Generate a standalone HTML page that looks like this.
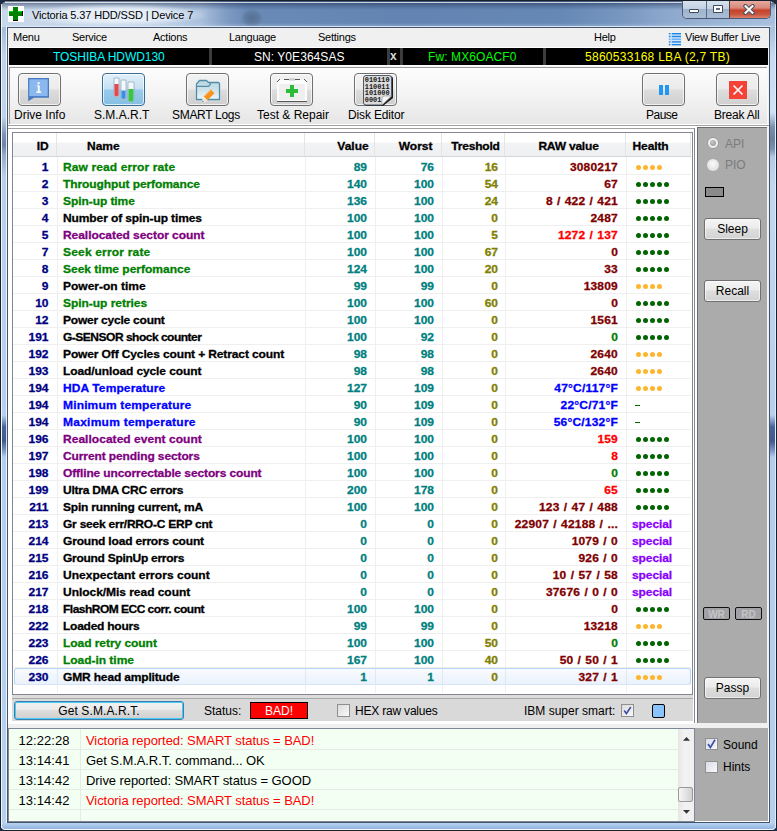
<!DOCTYPE html><html><head><meta charset="utf-8"><style>html,body{margin:0;padding:0;width:777px;height:831px;overflow:hidden;}body{position:relative;font-family:"Liberation Sans", sans-serif;}</style></head><body><div style="position:absolute;left:0;top:0;width:777px;height:831px;background:#1e2c44"></div>
<div style="position:absolute;left:0;top:0;width:777px;height:831px;background:#18202c;border-radius:8px 8px 5px 5px"></div>
<div style="position:absolute;left:1px;top:1px;width:775px;height:829px;border-radius:7px 7px 4px 4px;background:#b7d0ee"></div>
<div style="position:absolute;left:1px;top:1px;width:775px;height:26px;border-radius:7px 7px 0 0;background:linear-gradient(90deg,#c9d8ea 0px,#c4d5e9 150px,#aac0dc 200px,#7f9cc4 225px,#6a8ab6 245px,#6384b2 400px,#6688b5 560px,#7797c0 620px,#8aa6cb 660px,#97b1d3 700px,#a8c0de 777px)"></div>
<div style="position:absolute;left:1px;top:1px;width:775px;height:26px;border-radius:7px 7px 0 0;background:linear-gradient(180deg,rgba(20,35,70,0.5) 2px,rgba(30,50,90,0.35) 4px,rgba(40,60,90,0) 9px,rgba(255,255,255,0) 22px,rgba(200,220,240,0.4) 26px)"></div>
<div style="position:absolute;left:241px;top:9px;width:22px;height:18px;border-radius:50%;background:radial-gradient(ellipse at center,rgba(70,90,115,0.55) 0%,rgba(70,90,115,0.3) 45%,rgba(70,90,115,0) 75%)"></div>
<div style="position:absolute;left:5px;top:2px;width:767px;height:1px;background:rgba(255,255,255,0.75)"></div>
<div style="position:absolute;left:1px;top:4px;width:1px;height:824px;background:rgba(255,255,255,0.8)"></div>
<div style="position:absolute;left:775px;top:4px;width:1px;height:824px;background:rgba(255,255,255,0.6)"></div>
<div style="position:absolute;left:2px;top:27px;width:5px;height:796px;background:linear-gradient(180deg,#a3bbd8 0px,#bfd5ee 30px,#bdd3ec 90px,#7d92b0 108px,#6f84a2 118px,#95acc8 128px,#b8d0ec 150px,#b6cfee 388px,#8aa6cc 393px,#46639a 400px,#3f5b8e 414px,#7f9cc8 424px,#b3cdee 430px,#b6d0ef 796px)"></div>
<div style="position:absolute;left:770px;top:27px;width:5px;height:796px;background:linear-gradient(180deg,#a9c0dc 0px,#c6dbf2 30px,#cfe1f5 85px,#a9bfdb 92px,#7890b0 100px,#6a809e 112px,#7a92b2 122px,#b3cae6 130px,#c2d8f0 160px,#b7d0ef 388px,#8aa6cc 393px,#46639a 400px,#3f5b8e 414px,#7f9cc8 424px,#b3cdee 430px,#b6d0ef 796px)"></div>
<div style="position:absolute;left:2px;top:823px;width:773px;height:6px;background:linear-gradient(180deg,#b8d3f2,#93b4de);border-radius:0 0 4px 4px;border-bottom:1px solid rgba(255,255,255,0.85);box-sizing:content-box"></div>
<div style="position:absolute;left:6px;top:26px;width:765px;height:1px;background:rgba(225,235,248,0.9)"></div>
<div style="position:absolute;left:6px;top:27px;width:1px;height:796px;background:rgba(255,255,255,0.8)"></div>
<div style="position:absolute;left:769px;top:27px;width:1px;height:796px;background:rgba(255,255,255,0.6)"></div>
<div style="position:absolute;left:6px;top:822px;width:765px;height:1px;background:rgba(255,255,255,0.8)"></div>
<div style="position:absolute;left:7px;top:27px;width:761px;height:794px;border:1px solid #44546a;background:#f0f0f0"></div>
<div style="position:absolute;left:8px;top:6px;width:16px;height:16px;background:#fff"></div>
<svg style="position:absolute;left:8px;top:6px" width="16" height="16" viewBox="0 0 16 16"><rect x="5" y="1" width="5" height="14" fill="#000"/><rect x="1" y="5" width="14" height="5" fill="#000"/><rect x="1" y="5" width="13" height="5" fill="#008000"/><rect x="1" y="5" width="13" height="1" fill="#00e000"/><rect x="5" y="1" width="5" height="13" fill="#008000"/></svg>
<div style="position:absolute;left:22px;top:4px;width:185px;height:22px;border-radius:11px;background:radial-gradient(ellipse at center,rgba(235,242,250,0.85) 40%,rgba(235,242,250,0) 72%)"></div>
<div style="position:absolute;top:8.00px;font-size:11px;line-height:14px;color:#000;font-weight:normal;white-space:pre;letter-spacing:-0.13px;left:32px;">Victoria 5.37 HDD/SSD | Device 7</div>
<div style="position:absolute;left:682px;top:1px;width:87px;height:17px;border:1px solid #4b5b73;border-top:none;border-radius:0 0 5px 5px;overflow:hidden;background:#8fa6c4"><div style="position:absolute;left:0;top:0;width:23px;height:17px;background:linear-gradient(180deg,#d7e2ee 0%,#c2d1e3 45%,#9fb3cd 50%,#a9bdd6 100%)"></div><div style="position:absolute;left:23px;top:0;width:1px;height:17px;background:#5a6a82"></div><div style="position:absolute;left:24px;top:0;width:22px;height:17px;background:linear-gradient(180deg,#d7e2ee 0%,#c2d1e3 45%,#9fb3cd 50%,#a9bdd6 100%)"></div><div style="position:absolute;left:46px;top:0;width:1px;height:17px;background:#5a3a3a"></div><div style="position:absolute;left:47px;top:0;width:40px;height:17px;background:linear-gradient(180deg,#e7aaa0 0%,#d9897a 40%,#c6412a 55%,#c9583f 80%,#d8826f 100%)"></div></div>
<div style="position:absolute;left:689px;top:9px;width:8px;height:2px;background:#fff;border:1px solid #3f4a5a;border-radius:1px"></div>
<div style="position:absolute;left:713px;top:5px;width:10px;height:8px;background:#3f4a5a;border-radius:1px"></div>
<div style="position:absolute;left:714px;top:6px;width:8px;height:6px;background:#fff"></div>
<div style="position:absolute;left:716px;top:8px;width:4px;height:2px;background:#5d6c80"></div>
<svg style="position:absolute;left:743px;top:4px" width="12" height="11" viewBox="0 0 12 11"><path d="M2.3 2 L9.7 9 M9.7 2 L2.3 9" stroke="#46505c" stroke-width="4" stroke-linecap="round"/><path d="M2.6 2.3 L9.4 8.7 M9.4 2.3 L2.6 8.7" stroke="#fafafa" stroke-width="2.2" stroke-linecap="square"/></svg>
<div style="position:absolute;left:8px;top:28px;width:761px;height:19px;background:#f0f0f0"></div>
<div style="position:absolute;left:8px;top:47px;width:761px;height:1px;background:#fff"></div>
<div style="position:absolute;top:30.00px;font-size:11px;line-height:14px;color:#000;font-weight:normal;white-space:pre;letter-spacing:-0.25px;left:13px;">Menu</div>
<div style="position:absolute;top:30.00px;font-size:11px;line-height:14px;color:#000;font-weight:normal;white-space:pre;letter-spacing:-0.25px;left:72px;">Service</div>
<div style="position:absolute;top:30.00px;font-size:11px;line-height:14px;color:#000;font-weight:normal;white-space:pre;letter-spacing:-0.25px;left:153px;">Actions</div>
<div style="position:absolute;top:30.00px;font-size:11px;line-height:14px;color:#000;font-weight:normal;white-space:pre;letter-spacing:-0.25px;left:229px;">Language</div>
<div style="position:absolute;top:30.00px;font-size:11px;line-height:14px;color:#000;font-weight:normal;white-space:pre;letter-spacing:-0.25px;left:318px;">Settings</div>
<div style="position:absolute;top:30.00px;font-size:11px;line-height:14px;color:#000;font-weight:normal;white-space:pre;letter-spacing:-0.25px;left:594px;">Help</div>
<div style="position:absolute;top:30.00px;font-size:11px;line-height:14px;color:#000;font-weight:normal;white-space:pre;letter-spacing:-0.25px;left:685px;">View Buffer Live</div>
<svg style="position:absolute;left:668px;top:31px" width="14" height="15" viewBox="0 0 14 15"><rect x="1" y="2" width="12" height="12" fill="#cfe4fa"/><rect x="0.8" y="2" width="1.6" height="1.4" fill="#1e88e5"/><rect x="3.8" y="2" width="9.2" height="1.4" fill="#1e88e5"/><rect x="0.8" y="4.8" width="1.6" height="1.4" fill="#1e88e5"/><rect x="3.8" y="4.8" width="9.2" height="1.4" fill="#1e88e5"/><rect x="0.8" y="10.2" width="1.6" height="1.4" fill="#1e88e5"/><rect x="3.8" y="10.2" width="9.2" height="1.4" fill="#1e88e5"/><rect x="0.8" y="13" width="1.6" height="1.4" fill="#1e88e5"/><rect x="3.8" y="13" width="9.2" height="1.4" fill="#1e88e5"/><rect x="0.8" y="7.5" width="1.6" height="1.4" fill="#64b0f4"/><rect x="3.8" y="7.5" width="9.2" height="1.4" fill="#64b0f4"/></svg>
<div style="position:absolute;left:9px;top:48px;width:759px;height:17px;background:#000"></div>
<div style="position:absolute;left:209px;top:48px;width:3px;height:17px;background:#3c3c3c"></div>
<div style="position:absolute;left:387px;top:48px;width:3px;height:17px;background:#3c3c3c"></div>
<div style="position:absolute;left:400px;top:48px;width:3px;height:17px;background:#3c3c3c"></div>
<div style="position:absolute;left:543px;top:48px;width:3px;height:17px;background:#3c3c3c"></div>
<div style="position:absolute;top:50.00px;font-size:12px;line-height:15px;color:#00ffff;font-weight:normal;white-space:pre;letter-spacing:-0.05px;left:53px;">TOSHIBA HDWD130</div>
<div style="position:absolute;top:50.00px;font-size:12px;line-height:15px;color:#fff;font-weight:normal;white-space:pre;letter-spacing:0.05px;left:254px;">SN: Y0E364SAS</div>
<div style="position:absolute;top:49.00px;font-size:12px;line-height:15px;color:#d8d8d8;font-weight:bold;white-space:pre;left:390px;">x</div>
<div style="position:absolute;top:50.00px;font-size:12px;line-height:15px;color:#00ff00;font-weight:normal;white-space:pre;letter-spacing:0.1px;left:428px;">Fw: MX6OACF0</div>
<div style="position:absolute;top:50.00px;font-size:12px;line-height:15px;color:#ffff00;font-weight:normal;white-space:pre;letter-spacing:0.28px;left:585px;">5860533168 LBA (2,7 TB)</div>
<div style="position:absolute;left:8px;top:65px;width:761px;height:1px;background:#fff"></div>
<div style="position:absolute;left:8px;top:66px;width:761px;height:1px;background:#f4f4f4"></div>
<div style="position:absolute;left:9px;top:67px;width:758px;height:1px;background:#9a9a9a"></div>
<div style="position:absolute;left:9px;top:67px;width:1px;height:57px;background:#9a9a9a"></div>
<div style="position:absolute;left:767px;top:67px;width:1px;height:57px;background:#f8f8f8"></div>
<div style="position:absolute;left:10px;top:68px;width:757px;height:56px;background:linear-gradient(180deg,#fdfdfd 0%,#f3f3f3 50%,#e6e6e6 100%)"></div>
<div style="position:absolute;left:8px;top:124px;width:761px;height:1px;background:#fff"></div>
<div style="position:absolute;left:8px;top:125px;width:761px;height:1px;background:#a0a0a0"></div>
<div style="position:absolute;left:8px;top:126px;width:761px;height:2px;background:#fff"></div>
<div style="position:absolute;left:18px;top:73px;width:41px;height:31px;border:1px solid #707070;border-radius:4px;background:linear-gradient(180deg,#f2f2f2 0%,#ebebeb 48%,#dddddd 52%,#cfcfcf 100%);box-shadow:inset 0 0 0 1px rgba(255,255,255,0.7)"></div>
<div style="position:absolute;left:102px;top:73px;width:41px;height:31px;border:1px solid #3a6d96;border-radius:4px;background:linear-gradient(180deg,#e2f0fa 0%,#c4e0f3 48%,#98cbea 52%,#86bfe4 100%);box-shadow:inset 0 0 0 1px rgba(255,255,255,0.7)"></div>
<div style="position:absolute;left:186px;top:73px;width:41px;height:31px;border:1px solid #707070;border-radius:4px;background:linear-gradient(180deg,#f2f2f2 0%,#ebebeb 48%,#dddddd 52%,#cfcfcf 100%);box-shadow:inset 0 0 0 1px rgba(255,255,255,0.7)"></div>
<div style="position:absolute;left:270px;top:73px;width:41px;height:31px;border:1px solid #707070;border-radius:4px;background:linear-gradient(180deg,#f2f2f2 0%,#ebebeb 48%,#dddddd 52%,#cfcfcf 100%);box-shadow:inset 0 0 0 1px rgba(255,255,255,0.7)"></div>
<div style="position:absolute;left:354px;top:73px;width:41px;height:31px;border:1px solid #707070;border-radius:4px;background:linear-gradient(180deg,#f2f2f2 0%,#ebebeb 48%,#dddddd 52%,#cfcfcf 100%);box-shadow:inset 0 0 0 1px rgba(255,255,255,0.7)"></div>
<div style="position:absolute;left:642px;top:73px;width:41px;height:31px;border:1px solid #707070;border-radius:4px;background:linear-gradient(180deg,#f2f2f2 0%,#ebebeb 48%,#dddddd 52%,#cfcfcf 100%);box-shadow:inset 0 0 0 1px rgba(255,255,255,0.7)"></div>
<div style="position:absolute;left:716px;top:73px;width:41px;height:31px;border:1px solid #707070;border-radius:4px;background:linear-gradient(180deg,#f2f2f2 0%,#ebebeb 48%,#dddddd 52%,#cfcfcf 100%);box-shadow:inset 0 0 0 1px rgba(255,255,255,0.7)"></div>
<svg style="position:absolute;left:27px;top:77px" width="23" height="25" viewBox="0 0 23 25"><path d="M1 1 H22 V20.8 H7 L1.2 24.2 Z" fill="#4a7bc2"/><rect x="2.3" y="2.3" width="18.4" height="16.8" fill="#8ab8ef"/><rect x="10.6" y="5.2" width="2" height="2" fill="#fff"/><rect x="10.8" y="8.4" width="1.9" height="6.6" fill="#fff"/><rect x="9.8" y="8.4" width="1.6" height="1" fill="#fff"/><rect x="9.4" y="14.4" width="4.8" height="1.5" fill="#fff"/></svg>
<svg style="position:absolute;left:113px;top:77px" width="22" height="26" viewBox="0 0 22 26"><path d="M1 1 H6 V17.5 A2.5 2.5 0 0 1 1 17.5 Z" fill="#f4f8fb" stroke="#9aaabb" stroke-width="0.8"/><path d="M1.4 7 H5.6 V17.5 A2.1 2.1 0 0 1 1.4 17.5 Z" fill="#e5484a"/><path d="M8 3 H13 V20 A2.5 2.5 0 0 1 8 20 Z" fill="#f4f8fb" stroke="#9aaabb" stroke-width="0.8"/><path d="M8.4 13.5 H12.6 V20 A2.1 2.1 0 0 1 8.4 20 Z" fill="#3a8ee6"/><path d="M15 5 H21 V22 A3 3 0 0 1 15 22 Z" fill="#f4f8fb" stroke="#9aaabb" stroke-width="0.8"/><path d="M15.4 12 H20.6 V22 A2.6 2.6 0 0 1 15.4 22 Z" fill="#3cc44a"/></svg>
<svg style="position:absolute;left:195px;top:79px" width="26" height="25" viewBox="0 0 26 25"><defs><linearGradient id="fg" x1="0" y1="0" x2="0" y2="1"><stop offset="0" stop-color="#bcd6e0"/><stop offset="0.5" stop-color="#cfe3ea"/><stop offset="1" stop-color="#eef6f8"/></linearGradient></defs><path d="M1.5 5 L4.5 1.5 H11.5 L13.5 3.5 H23.5 L24.5 4.5 V20.5 H1.5 Z" fill="url(#fg)" stroke="#4f8fab" stroke-width="1.3" stroke-linejoin="round"/><path d="M1.5 7.3 H13.5 L15.3 5.5 V3.6" fill="none" stroke="#4f8fab" stroke-width="1.2"/><path d="M8.5 17.8 L15.8 10.5 L19.5 14.2 L12.2 21.5 Z" fill="#f7931e"/><path d="M9.5 17.3 L16 10.8" stroke="#ffb450" stroke-width="1"/><path d="M8.5 17.8 L12.2 21.5 L7 23.5 Z" fill="#e6e6e6" stroke="#fff" stroke-width="0.6"/><path d="M7.6 21.6 L7 23.5 L9 22.8 Z" fill="#777"/></svg>
<svg style="position:absolute;left:276px;top:77px" width="32" height="26" viewBox="0 0 32 26"><rect x="1" y="2.5" width="30" height="22" fill="#fbfbfb"/><rect x="3" y="7" width="26" height="16" fill="#efefef"/><path d="M1 24.5 H31" stroke="#555" stroke-width="1"/><path d="M1 5 L4 2 M28 2 L31 5 M8 2.5 H13 M19 2.5 H24" stroke="#555" stroke-width="1"/><rect x="13" y="1.5" width="6" height="2" fill="#c8c8c8"/><rect x="14" y="8" width="4" height="12" fill="#2dbb3a"/><rect x="10" y="12" width="12" height="4" fill="#2dbb3a"/></svg>
<svg style="position:absolute;left:362px;top:74px" width="32" height="33" viewBox="0 0 32 33"><path d="M3 5 Q3 2 6 2 H28 Q31 2 31 5 V24 L21 32 H5 Q3 32 3 30 Z" fill="#1a1a1a"/><path d="M1.5 4 Q1.5 1.5 4 1.5 H27 Q29.5 1.5 29.5 4 V22 L20 31 H4 Q1.5 31 1.5 29 Z" fill="#dadada" stroke="#4f5a66" stroke-width="1"/><path d="M20 31 L20 24.5 Q20 22 22.5 22 H29.5 Z" fill="#f6f6f6" stroke="#8a8a8a" stroke-width="0.6"/><text x="2.8" y="8" font-family="Liberation Mono" font-weight="bold" font-size="6.9" fill="#151515">010110</text><text x="2.8" y="14.6" font-family="Liberation Mono" font-weight="bold" font-size="6.9" fill="#151515">110011</text><text x="2.8" y="21.1" font-family="Liberation Mono" font-weight="bold" font-size="6.9" fill="#151515">101000</text><text x="2.8" y="27.5" font-family="Liberation Mono" font-weight="bold" font-size="6.9" fill="#151515">0001</text></svg>
<div style="position:absolute;left:659px;top:85px;width:4px;height:10px;background:#2196f3"></div>
<div style="position:absolute;left:665px;top:85px;width:4px;height:10px;background:#2196f3"></div>
<svg style="position:absolute;left:729px;top:81px" width="18" height="18" viewBox="0 0 18 18"><rect width="18" height="18" fill="#f44336"/><path d="M4.5 4.5 L13.5 13.5 M13.5 4.5 L4.5 13.5" stroke="#fff" stroke-width="1.6"/></svg>
<div style="position:absolute;top:108.00px;font-size:12px;line-height:15px;color:#000;font-weight:normal;white-space:pre;letter-spacing:0px;left:14px;">Drive Info</div>
<div style="position:absolute;top:108.00px;font-size:12px;line-height:15px;color:#000;font-weight:normal;white-space:pre;letter-spacing:0px;left:94px;">S.M.A.R.T</div>
<div style="position:absolute;top:108.00px;font-size:12px;line-height:15px;color:#000;font-weight:normal;white-space:pre;letter-spacing:-0.3px;left:172px;">SMART Logs</div>
<div style="position:absolute;top:108.00px;font-size:12px;line-height:15px;color:#000;font-weight:normal;white-space:pre;letter-spacing:0px;left:257px;">Test & Repair</div>
<div style="position:absolute;top:108.00px;font-size:12px;line-height:15px;color:#000;font-weight:normal;white-space:pre;letter-spacing:-0.15px;left:348px;">Disk Editor</div>
<div style="position:absolute;top:108.00px;font-size:12px;line-height:15px;color:#000;font-weight:normal;white-space:pre;letter-spacing:-0.5px;left:646px;">Pause</div>
<div style="position:absolute;top:108.00px;font-size:12px;line-height:15px;color:#000;font-weight:normal;white-space:pre;letter-spacing:-0.2px;left:714px;">Break All</div>
<div style="position:absolute;left:8px;top:128px;width:687px;height:1px;background:#a0a0a0"></div>
<div style="position:absolute;left:8px;top:129px;width:687px;height:594px;background:#fff"></div>
<div style="position:absolute;left:12px;top:132px;width:679px;height:561px;border:1px solid #828790;background:#fff"></div>
<div style="position:absolute;left:13px;top:133px;width:678px;height:23px;background:linear-gradient(180deg,#ffffff 0%,#ffffff 40%,#f2f3f5 45%,#eff0f2 100%)"></div>
<div style="position:absolute;left:13px;top:156px;width:678px;height:1px;background:#d5d5d5"></div>
<div style="position:absolute;left:56px;top:133px;width:1px;height:23px;background:#e3e4e6"></div>
<div style="position:absolute;left:304px;top:133px;width:1px;height:23px;background:#e3e4e6"></div>
<div style="position:absolute;left:374px;top:133px;width:1px;height:23px;background:#e3e4e6"></div>
<div style="position:absolute;left:441px;top:133px;width:1px;height:23px;background:#e3e4e6"></div>
<div style="position:absolute;left:504px;top:133px;width:1px;height:23px;background:#e3e4e6"></div>
<div style="position:absolute;left:625px;top:133px;width:1px;height:23px;background:#e3e4e6"></div>
<div style="position:absolute;left:690px;top:133px;width:1px;height:23px;background:#e3e4e6"></div>
<div style="position:absolute;left:57px;top:157px;width:1px;height:536px;background:#efefef"></div>
<div style="position:absolute;left:305px;top:157px;width:1px;height:536px;background:#efefef"></div>
<div style="position:absolute;left:375px;top:157px;width:1px;height:536px;background:#efefef"></div>
<div style="position:absolute;left:442px;top:157px;width:1px;height:536px;background:#efefef"></div>
<div style="position:absolute;left:505px;top:157px;width:1px;height:536px;background:#efefef"></div>
<div style="position:absolute;left:626px;top:157px;width:1px;height:536px;background:#efefef"></div>
<div style="position:absolute;left:13px;top:174px;width:678px;height:1px;background:#efefef"></div>
<div style="position:absolute;left:13px;top:191px;width:678px;height:1px;background:#efefef"></div>
<div style="position:absolute;left:13px;top:208px;width:678px;height:1px;background:#efefef"></div>
<div style="position:absolute;left:13px;top:225px;width:678px;height:1px;background:#efefef"></div>
<div style="position:absolute;left:13px;top:242px;width:678px;height:1px;background:#efefef"></div>
<div style="position:absolute;left:13px;top:259px;width:678px;height:1px;background:#efefef"></div>
<div style="position:absolute;left:13px;top:276px;width:678px;height:1px;background:#efefef"></div>
<div style="position:absolute;left:13px;top:293px;width:678px;height:1px;background:#efefef"></div>
<div style="position:absolute;left:13px;top:310px;width:678px;height:1px;background:#efefef"></div>
<div style="position:absolute;left:13px;top:327px;width:678px;height:1px;background:#efefef"></div>
<div style="position:absolute;left:13px;top:344px;width:678px;height:1px;background:#efefef"></div>
<div style="position:absolute;left:13px;top:361px;width:678px;height:1px;background:#efefef"></div>
<div style="position:absolute;left:13px;top:378px;width:678px;height:1px;background:#efefef"></div>
<div style="position:absolute;left:13px;top:395px;width:678px;height:1px;background:#efefef"></div>
<div style="position:absolute;left:13px;top:412px;width:678px;height:1px;background:#efefef"></div>
<div style="position:absolute;left:13px;top:429px;width:678px;height:1px;background:#efefef"></div>
<div style="position:absolute;left:13px;top:446px;width:678px;height:1px;background:#efefef"></div>
<div style="position:absolute;left:13px;top:463px;width:678px;height:1px;background:#efefef"></div>
<div style="position:absolute;left:13px;top:480px;width:678px;height:1px;background:#efefef"></div>
<div style="position:absolute;left:13px;top:497px;width:678px;height:1px;background:#efefef"></div>
<div style="position:absolute;left:13px;top:514px;width:678px;height:1px;background:#efefef"></div>
<div style="position:absolute;left:13px;top:531px;width:678px;height:1px;background:#efefef"></div>
<div style="position:absolute;left:13px;top:548px;width:678px;height:1px;background:#efefef"></div>
<div style="position:absolute;left:13px;top:565px;width:678px;height:1px;background:#efefef"></div>
<div style="position:absolute;left:13px;top:582px;width:678px;height:1px;background:#efefef"></div>
<div style="position:absolute;left:13px;top:599px;width:678px;height:1px;background:#efefef"></div>
<div style="position:absolute;left:13px;top:616px;width:678px;height:1px;background:#efefef"></div>
<div style="position:absolute;left:13px;top:633px;width:678px;height:1px;background:#efefef"></div>
<div style="position:absolute;left:13px;top:650px;width:678px;height:1px;background:#efefef"></div>
<div style="position:absolute;left:13px;top:667px;width:678px;height:1px;background:#efefef"></div>
<div style="position:absolute;left:13px;top:684px;width:678px;height:1px;background:#efefef"></div>
<div style="position:absolute;left:14px;top:668px;width:677px;height:17px;border:1px solid #b9d3f3;border-bottom-color:#d6e5f8;border-radius:3px;background:linear-gradient(180deg,#f8fbfe 0%,#ebf2fc 100%);box-sizing:border-box"></div>
<div style="position:absolute;left:57px;top:669px;width:1px;height:15px;background:#dfe7f1"></div>
<div style="position:absolute;left:305px;top:669px;width:1px;height:15px;background:#dfe7f1"></div>
<div style="position:absolute;left:375px;top:669px;width:1px;height:15px;background:#dfe7f1"></div>
<div style="position:absolute;left:442px;top:669px;width:1px;height:15px;background:#dfe7f1"></div>
<div style="position:absolute;left:505px;top:669px;width:1px;height:15px;background:#dfe7f1"></div>
<div style="position:absolute;left:626px;top:669px;width:1px;height:15px;background:#dfe7f1"></div>
<div style="position:absolute;top:139.00px;font-size:12px;line-height:15px;color:#000;font-weight:bold;white-space:pre;transform:scaleY(0.92);transform-origin:0 11px;-webkit-text-stroke:0.3px #000;right:728.3px;">ID</div>
<div style="position:absolute;top:139.00px;font-size:12px;line-height:15px;color:#000;font-weight:bold;white-space:pre;transform:scaleY(0.92);transform-origin:0 11px;-webkit-text-stroke:0.3px #000;left:87px;">Name</div>
<div style="position:absolute;top:139.00px;font-size:12px;line-height:15px;color:#000;font-weight:bold;white-space:pre;transform:scaleY(0.92);transform-origin:0 11px;-webkit-text-stroke:0.3px #000;right:408.3px;">Value</div>
<div style="position:absolute;top:139.00px;font-size:12px;line-height:15px;color:#000;font-weight:bold;white-space:pre;transform:scaleY(0.92);transform-origin:0 11px;-webkit-text-stroke:0.3px #000;right:344.5px;">Worst</div>
<div style="position:absolute;top:139.00px;font-size:12px;line-height:15px;color:#000;font-weight:bold;white-space:pre;letter-spacing:-0.2px;transform:scaleY(0.92);transform-origin:0 11px;-webkit-text-stroke:0.3px #000;right:277.3px;">Treshold</div>
<div style="position:absolute;top:139.00px;font-size:12px;line-height:15px;color:#000;font-weight:bold;white-space:pre;letter-spacing:-0.2px;transform:scaleY(0.92);transform-origin:0 11px;-webkit-text-stroke:0.3px #000;left:538.4px;">RAW value</div>
<div style="position:absolute;top:139.00px;font-size:12px;line-height:15px;color:#000;font-weight:bold;white-space:pre;letter-spacing:-0.1px;transform:scaleY(0.92);transform-origin:0 11px;-webkit-text-stroke:0.3px #000;left:632.5px;">Health</div>
<div style="position:absolute;top:160.00px;font-size:12px;line-height:15px;color:#000080;font-weight:bold;white-space:pre;transform:scaleY(0.92);transform-origin:0 11px;-webkit-text-stroke:0.3px #000080;right:728.5px;">1</div>
<div style="position:absolute;top:160.00px;font-size:12px;line-height:15px;color:#008000;font-weight:bold;white-space:pre;letter-spacing:0.117px;transform:scaleY(0.92);transform-origin:0 11px;-webkit-text-stroke:0.3px #008000;left:63px;">Raw read error rate</div>
<div style="position:absolute;top:160.00px;font-size:12px;line-height:15px;color:#008080;font-weight:bold;white-space:pre;transform:scaleY(0.92);transform-origin:0 11px;-webkit-text-stroke:0.3px #008080;right:410px;">89</div>
<div style="position:absolute;top:160.00px;font-size:12px;line-height:15px;color:#008080;font-weight:bold;white-space:pre;transform:scaleY(0.92);transform-origin:0 11px;-webkit-text-stroke:0.3px #008080;right:343px;">76</div>
<div style="position:absolute;top:160.00px;font-size:12px;line-height:15px;color:#808000;font-weight:bold;white-space:pre;transform:scaleY(0.92);transform-origin:0 11px;-webkit-text-stroke:0.3px #808000;right:279px;">16</div>
<div style="position:absolute;top:160.00px;font-size:12px;line-height:15px;color:#800000;font-weight:bold;white-space:pre;letter-spacing:0.2px;word-spacing:0.7px;transform:scaleY(0.92);transform-origin:0 11px;-webkit-text-stroke:0.3px #800000;right:159px;">3080217</div>
<div style="position:absolute;left:635.5px;top:164.7px;width:5.4px;height:5.4px;border-radius:50%;background:#ffb52e"></div>
<div style="position:absolute;left:642.5px;top:164.7px;width:5.4px;height:5.4px;border-radius:50%;background:#ffb52e"></div>
<div style="position:absolute;left:649.5px;top:164.7px;width:5.4px;height:5.4px;border-radius:50%;background:#ffb52e"></div>
<div style="position:absolute;left:656.5px;top:164.7px;width:5.4px;height:5.4px;border-radius:50%;background:#ffb52e"></div>
<div style="position:absolute;top:177.00px;font-size:12px;line-height:15px;color:#000080;font-weight:bold;white-space:pre;transform:scaleY(0.92);transform-origin:0 11px;-webkit-text-stroke:0.3px #000080;right:728.5px;">2</div>
<div style="position:absolute;top:177.00px;font-size:12px;line-height:15px;color:#008000;font-weight:bold;white-space:pre;letter-spacing:-0.085px;transform:scaleY(0.92);transform-origin:0 11px;-webkit-text-stroke:0.3px #008000;left:63px;">Throughput perfomance</div>
<div style="position:absolute;top:177.00px;font-size:12px;line-height:15px;color:#008080;font-weight:bold;white-space:pre;transform:scaleY(0.92);transform-origin:0 11px;-webkit-text-stroke:0.3px #008080;right:410px;">140</div>
<div style="position:absolute;top:177.00px;font-size:12px;line-height:15px;color:#008080;font-weight:bold;white-space:pre;transform:scaleY(0.92);transform-origin:0 11px;-webkit-text-stroke:0.3px #008080;right:343px;">100</div>
<div style="position:absolute;top:177.00px;font-size:12px;line-height:15px;color:#808000;font-weight:bold;white-space:pre;transform:scaleY(0.92);transform-origin:0 11px;-webkit-text-stroke:0.3px #808000;right:279px;">54</div>
<div style="position:absolute;top:177.00px;font-size:12px;line-height:15px;color:#800000;font-weight:bold;white-space:pre;letter-spacing:0.2px;word-spacing:0.7px;transform:scaleY(0.92);transform-origin:0 11px;-webkit-text-stroke:0.3px #800000;right:159px;">67</div>
<div style="position:absolute;left:635.5px;top:181.7px;width:5.4px;height:5.4px;border-radius:50%;background:#006400"></div>
<div style="position:absolute;left:642.5px;top:181.7px;width:5.4px;height:5.4px;border-radius:50%;background:#006400"></div>
<div style="position:absolute;left:649.5px;top:181.7px;width:5.4px;height:5.4px;border-radius:50%;background:#006400"></div>
<div style="position:absolute;left:656.5px;top:181.7px;width:5.4px;height:5.4px;border-radius:50%;background:#006400"></div>
<div style="position:absolute;left:663.5px;top:181.7px;width:5.4px;height:5.4px;border-radius:50%;background:#006400"></div>
<div style="position:absolute;top:194.00px;font-size:12px;line-height:15px;color:#000080;font-weight:bold;white-space:pre;transform:scaleY(0.92);transform-origin:0 11px;-webkit-text-stroke:0.3px #000080;right:728.5px;">3</div>
<div style="position:absolute;top:194.00px;font-size:12px;line-height:15px;color:#008000;font-weight:bold;white-space:pre;letter-spacing:-0.073px;transform:scaleY(0.92);transform-origin:0 11px;-webkit-text-stroke:0.3px #008000;left:63px;">Spin-up time</div>
<div style="position:absolute;top:194.00px;font-size:12px;line-height:15px;color:#008080;font-weight:bold;white-space:pre;transform:scaleY(0.92);transform-origin:0 11px;-webkit-text-stroke:0.3px #008080;right:410px;">136</div>
<div style="position:absolute;top:194.00px;font-size:12px;line-height:15px;color:#008080;font-weight:bold;white-space:pre;transform:scaleY(0.92);transform-origin:0 11px;-webkit-text-stroke:0.3px #008080;right:343px;">100</div>
<div style="position:absolute;top:194.00px;font-size:12px;line-height:15px;color:#808000;font-weight:bold;white-space:pre;transform:scaleY(0.92);transform-origin:0 11px;-webkit-text-stroke:0.3px #808000;right:279px;">24</div>
<div style="position:absolute;top:194.00px;font-size:12px;line-height:15px;color:#800000;font-weight:bold;white-space:pre;letter-spacing:0.2px;word-spacing:0.7px;transform:scaleY(0.92);transform-origin:0 11px;-webkit-text-stroke:0.3px #800000;right:159px;">8 / 422 / 421</div>
<div style="position:absolute;left:635.5px;top:198.7px;width:5.4px;height:5.4px;border-radius:50%;background:#006400"></div>
<div style="position:absolute;left:642.5px;top:198.7px;width:5.4px;height:5.4px;border-radius:50%;background:#006400"></div>
<div style="position:absolute;left:649.5px;top:198.7px;width:5.4px;height:5.4px;border-radius:50%;background:#006400"></div>
<div style="position:absolute;left:656.5px;top:198.7px;width:5.4px;height:5.4px;border-radius:50%;background:#006400"></div>
<div style="position:absolute;left:663.5px;top:198.7px;width:5.4px;height:5.4px;border-radius:50%;background:#006400"></div>
<div style="position:absolute;top:211.00px;font-size:12px;line-height:15px;color:#000080;font-weight:bold;white-space:pre;transform:scaleY(0.92);transform-origin:0 11px;-webkit-text-stroke:0.3px #000080;right:728.5px;">4</div>
<div style="position:absolute;top:211.00px;font-size:12px;line-height:15px;color:#000;font-weight:bold;white-space:pre;letter-spacing:-0.105px;transform:scaleY(0.92);transform-origin:0 11px;-webkit-text-stroke:0.3px #000;left:63px;">Number of spin-up times</div>
<div style="position:absolute;top:211.00px;font-size:12px;line-height:15px;color:#008080;font-weight:bold;white-space:pre;transform:scaleY(0.92);transform-origin:0 11px;-webkit-text-stroke:0.3px #008080;right:410px;">100</div>
<div style="position:absolute;top:211.00px;font-size:12px;line-height:15px;color:#008080;font-weight:bold;white-space:pre;transform:scaleY(0.92);transform-origin:0 11px;-webkit-text-stroke:0.3px #008080;right:343px;">100</div>
<div style="position:absolute;top:211.00px;font-size:12px;line-height:15px;color:#808000;font-weight:bold;white-space:pre;transform:scaleY(0.92);transform-origin:0 11px;-webkit-text-stroke:0.3px #808000;right:279px;">0</div>
<div style="position:absolute;top:211.00px;font-size:12px;line-height:15px;color:#800000;font-weight:bold;white-space:pre;letter-spacing:0.2px;word-spacing:0.7px;transform:scaleY(0.92);transform-origin:0 11px;-webkit-text-stroke:0.3px #800000;right:159px;">2487</div>
<div style="position:absolute;left:635.5px;top:215.7px;width:5.4px;height:5.4px;border-radius:50%;background:#006400"></div>
<div style="position:absolute;left:642.5px;top:215.7px;width:5.4px;height:5.4px;border-radius:50%;background:#006400"></div>
<div style="position:absolute;left:649.5px;top:215.7px;width:5.4px;height:5.4px;border-radius:50%;background:#006400"></div>
<div style="position:absolute;left:656.5px;top:215.7px;width:5.4px;height:5.4px;border-radius:50%;background:#006400"></div>
<div style="position:absolute;left:663.5px;top:215.7px;width:5.4px;height:5.4px;border-radius:50%;background:#006400"></div>
<div style="position:absolute;top:228.00px;font-size:12px;line-height:15px;color:#000080;font-weight:bold;white-space:pre;transform:scaleY(0.92);transform-origin:0 11px;-webkit-text-stroke:0.3px #000080;right:728.5px;">5</div>
<div style="position:absolute;top:228.00px;font-size:12px;line-height:15px;color:#800080;font-weight:bold;white-space:pre;letter-spacing:-0.052px;transform:scaleY(0.92);transform-origin:0 11px;-webkit-text-stroke:0.3px #800080;left:63px;">Reallocated sector count</div>
<div style="position:absolute;top:228.00px;font-size:12px;line-height:15px;color:#008080;font-weight:bold;white-space:pre;transform:scaleY(0.92);transform-origin:0 11px;-webkit-text-stroke:0.3px #008080;right:410px;">100</div>
<div style="position:absolute;top:228.00px;font-size:12px;line-height:15px;color:#008080;font-weight:bold;white-space:pre;transform:scaleY(0.92);transform-origin:0 11px;-webkit-text-stroke:0.3px #008080;right:343px;">100</div>
<div style="position:absolute;top:228.00px;font-size:12px;line-height:15px;color:#808000;font-weight:bold;white-space:pre;transform:scaleY(0.92);transform-origin:0 11px;-webkit-text-stroke:0.3px #808000;right:279px;">5</div>
<div style="position:absolute;top:228.00px;font-size:12px;line-height:15px;color:#ff0000;font-weight:bold;white-space:pre;letter-spacing:0.2px;word-spacing:0.7px;transform:scaleY(0.92);transform-origin:0 11px;-webkit-text-stroke:0.3px #ff0000;right:159px;">1272 / 137</div>
<div style="position:absolute;left:635.5px;top:232.7px;width:5.4px;height:5.4px;border-radius:50%;background:#006400"></div>
<div style="position:absolute;left:642.5px;top:232.7px;width:5.4px;height:5.4px;border-radius:50%;background:#006400"></div>
<div style="position:absolute;left:649.5px;top:232.7px;width:5.4px;height:5.4px;border-radius:50%;background:#006400"></div>
<div style="position:absolute;left:656.5px;top:232.7px;width:5.4px;height:5.4px;border-radius:50%;background:#006400"></div>
<div style="position:absolute;left:663.5px;top:232.7px;width:5.4px;height:5.4px;border-radius:50%;background:#006400"></div>
<div style="position:absolute;top:245.00px;font-size:12px;line-height:15px;color:#000080;font-weight:bold;white-space:pre;transform:scaleY(0.92);transform-origin:0 11px;-webkit-text-stroke:0.3px #000080;right:728.5px;">7</div>
<div style="position:absolute;top:245.00px;font-size:12px;line-height:15px;color:#008000;font-weight:bold;white-space:pre;letter-spacing:0.179px;transform:scaleY(0.92);transform-origin:0 11px;-webkit-text-stroke:0.3px #008000;left:63px;">Seek error rate</div>
<div style="position:absolute;top:245.00px;font-size:12px;line-height:15px;color:#008080;font-weight:bold;white-space:pre;transform:scaleY(0.92);transform-origin:0 11px;-webkit-text-stroke:0.3px #008080;right:410px;">100</div>
<div style="position:absolute;top:245.00px;font-size:12px;line-height:15px;color:#008080;font-weight:bold;white-space:pre;transform:scaleY(0.92);transform-origin:0 11px;-webkit-text-stroke:0.3px #008080;right:343px;">100</div>
<div style="position:absolute;top:245.00px;font-size:12px;line-height:15px;color:#808000;font-weight:bold;white-space:pre;transform:scaleY(0.92);transform-origin:0 11px;-webkit-text-stroke:0.3px #808000;right:279px;">67</div>
<div style="position:absolute;top:245.00px;font-size:12px;line-height:15px;color:#800000;font-weight:bold;white-space:pre;letter-spacing:0.2px;word-spacing:0.7px;transform:scaleY(0.92);transform-origin:0 11px;-webkit-text-stroke:0.3px #800000;right:159px;">0</div>
<div style="position:absolute;left:635.5px;top:249.7px;width:5.4px;height:5.4px;border-radius:50%;background:#006400"></div>
<div style="position:absolute;left:642.5px;top:249.7px;width:5.4px;height:5.4px;border-radius:50%;background:#006400"></div>
<div style="position:absolute;left:649.5px;top:249.7px;width:5.4px;height:5.4px;border-radius:50%;background:#006400"></div>
<div style="position:absolute;left:656.5px;top:249.7px;width:5.4px;height:5.4px;border-radius:50%;background:#006400"></div>
<div style="position:absolute;left:663.5px;top:249.7px;width:5.4px;height:5.4px;border-radius:50%;background:#006400"></div>
<div style="position:absolute;top:262.00px;font-size:12px;line-height:15px;color:#000080;font-weight:bold;white-space:pre;transform:scaleY(0.92);transform-origin:0 11px;-webkit-text-stroke:0.3px #000080;right:728.5px;">8</div>
<div style="position:absolute;top:262.00px;font-size:12px;line-height:15px;color:#008000;font-weight:bold;white-space:pre;letter-spacing:0.000px;transform:scaleY(0.92);transform-origin:0 11px;-webkit-text-stroke:0.3px #008000;left:63px;">Seek time perfomance</div>
<div style="position:absolute;top:262.00px;font-size:12px;line-height:15px;color:#008080;font-weight:bold;white-space:pre;transform:scaleY(0.92);transform-origin:0 11px;-webkit-text-stroke:0.3px #008080;right:410px;">124</div>
<div style="position:absolute;top:262.00px;font-size:12px;line-height:15px;color:#008080;font-weight:bold;white-space:pre;transform:scaleY(0.92);transform-origin:0 11px;-webkit-text-stroke:0.3px #008080;right:343px;">100</div>
<div style="position:absolute;top:262.00px;font-size:12px;line-height:15px;color:#808000;font-weight:bold;white-space:pre;transform:scaleY(0.92);transform-origin:0 11px;-webkit-text-stroke:0.3px #808000;right:279px;">20</div>
<div style="position:absolute;top:262.00px;font-size:12px;line-height:15px;color:#800000;font-weight:bold;white-space:pre;letter-spacing:0.2px;word-spacing:0.7px;transform:scaleY(0.92);transform-origin:0 11px;-webkit-text-stroke:0.3px #800000;right:159px;">33</div>
<div style="position:absolute;left:635.5px;top:266.7px;width:5.4px;height:5.4px;border-radius:50%;background:#006400"></div>
<div style="position:absolute;left:642.5px;top:266.7px;width:5.4px;height:5.4px;border-radius:50%;background:#006400"></div>
<div style="position:absolute;left:649.5px;top:266.7px;width:5.4px;height:5.4px;border-radius:50%;background:#006400"></div>
<div style="position:absolute;left:656.5px;top:266.7px;width:5.4px;height:5.4px;border-radius:50%;background:#006400"></div>
<div style="position:absolute;left:663.5px;top:266.7px;width:5.4px;height:5.4px;border-radius:50%;background:#006400"></div>
<div style="position:absolute;top:279.00px;font-size:12px;line-height:15px;color:#000080;font-weight:bold;white-space:pre;transform:scaleY(0.92);transform-origin:0 11px;-webkit-text-stroke:0.3px #000080;right:728.5px;">9</div>
<div style="position:absolute;top:279.00px;font-size:12px;line-height:15px;color:#000;font-weight:bold;white-space:pre;letter-spacing:0.000px;transform:scaleY(0.92);transform-origin:0 11px;-webkit-text-stroke:0.3px #000;left:63px;">Power-on time</div>
<div style="position:absolute;top:279.00px;font-size:12px;line-height:15px;color:#008080;font-weight:bold;white-space:pre;transform:scaleY(0.92);transform-origin:0 11px;-webkit-text-stroke:0.3px #008080;right:410px;">99</div>
<div style="position:absolute;top:279.00px;font-size:12px;line-height:15px;color:#008080;font-weight:bold;white-space:pre;transform:scaleY(0.92);transform-origin:0 11px;-webkit-text-stroke:0.3px #008080;right:343px;">99</div>
<div style="position:absolute;top:279.00px;font-size:12px;line-height:15px;color:#808000;font-weight:bold;white-space:pre;transform:scaleY(0.92);transform-origin:0 11px;-webkit-text-stroke:0.3px #808000;right:279px;">0</div>
<div style="position:absolute;top:279.00px;font-size:12px;line-height:15px;color:#800000;font-weight:bold;white-space:pre;letter-spacing:0.2px;word-spacing:0.7px;transform:scaleY(0.92);transform-origin:0 11px;-webkit-text-stroke:0.3px #800000;right:159px;">13809</div>
<div style="position:absolute;left:635.5px;top:283.7px;width:5.4px;height:5.4px;border-radius:50%;background:#ffb52e"></div>
<div style="position:absolute;left:642.5px;top:283.7px;width:5.4px;height:5.4px;border-radius:50%;background:#ffb52e"></div>
<div style="position:absolute;left:649.5px;top:283.7px;width:5.4px;height:5.4px;border-radius:50%;background:#ffb52e"></div>
<div style="position:absolute;left:656.5px;top:283.7px;width:5.4px;height:5.4px;border-radius:50%;background:#ffb52e"></div>
<div style="position:absolute;top:296.00px;font-size:12px;line-height:15px;color:#000080;font-weight:bold;white-space:pre;transform:scaleY(0.92);transform-origin:0 11px;-webkit-text-stroke:0.3px #000080;right:728.5px;">10</div>
<div style="position:absolute;top:296.00px;font-size:12px;line-height:15px;color:#008000;font-weight:bold;white-space:pre;letter-spacing:-0.036px;transform:scaleY(0.92);transform-origin:0 11px;-webkit-text-stroke:0.3px #008000;left:63px;">Spin-up retries</div>
<div style="position:absolute;top:296.00px;font-size:12px;line-height:15px;color:#008080;font-weight:bold;white-space:pre;transform:scaleY(0.92);transform-origin:0 11px;-webkit-text-stroke:0.3px #008080;right:410px;">100</div>
<div style="position:absolute;top:296.00px;font-size:12px;line-height:15px;color:#008080;font-weight:bold;white-space:pre;transform:scaleY(0.92);transform-origin:0 11px;-webkit-text-stroke:0.3px #008080;right:343px;">100</div>
<div style="position:absolute;top:296.00px;font-size:12px;line-height:15px;color:#808000;font-weight:bold;white-space:pre;transform:scaleY(0.92);transform-origin:0 11px;-webkit-text-stroke:0.3px #808000;right:279px;">60</div>
<div style="position:absolute;top:296.00px;font-size:12px;line-height:15px;color:#800000;font-weight:bold;white-space:pre;letter-spacing:0.2px;word-spacing:0.7px;transform:scaleY(0.92);transform-origin:0 11px;-webkit-text-stroke:0.3px #800000;right:159px;">0</div>
<div style="position:absolute;left:635.5px;top:300.7px;width:5.4px;height:5.4px;border-radius:50%;background:#006400"></div>
<div style="position:absolute;left:642.5px;top:300.7px;width:5.4px;height:5.4px;border-radius:50%;background:#006400"></div>
<div style="position:absolute;left:649.5px;top:300.7px;width:5.4px;height:5.4px;border-radius:50%;background:#006400"></div>
<div style="position:absolute;left:656.5px;top:300.7px;width:5.4px;height:5.4px;border-radius:50%;background:#006400"></div>
<div style="position:absolute;left:663.5px;top:300.7px;width:5.4px;height:5.4px;border-radius:50%;background:#006400"></div>
<div style="position:absolute;top:313.00px;font-size:12px;line-height:15px;color:#000080;font-weight:bold;white-space:pre;transform:scaleY(0.92);transform-origin:0 11px;-webkit-text-stroke:0.3px #000080;right:728.5px;">12</div>
<div style="position:absolute;top:313.00px;font-size:12px;line-height:15px;color:#000;font-weight:bold;white-space:pre;letter-spacing:-0.219px;transform:scaleY(0.92);transform-origin:0 11px;-webkit-text-stroke:0.3px #000;left:63px;">Power cycle count</div>
<div style="position:absolute;top:313.00px;font-size:12px;line-height:15px;color:#008080;font-weight:bold;white-space:pre;transform:scaleY(0.92);transform-origin:0 11px;-webkit-text-stroke:0.3px #008080;right:410px;">100</div>
<div style="position:absolute;top:313.00px;font-size:12px;line-height:15px;color:#008080;font-weight:bold;white-space:pre;transform:scaleY(0.92);transform-origin:0 11px;-webkit-text-stroke:0.3px #008080;right:343px;">100</div>
<div style="position:absolute;top:313.00px;font-size:12px;line-height:15px;color:#808000;font-weight:bold;white-space:pre;transform:scaleY(0.92);transform-origin:0 11px;-webkit-text-stroke:0.3px #808000;right:279px;">0</div>
<div style="position:absolute;top:313.00px;font-size:12px;line-height:15px;color:#800000;font-weight:bold;white-space:pre;letter-spacing:0.2px;word-spacing:0.7px;transform:scaleY(0.92);transform-origin:0 11px;-webkit-text-stroke:0.3px #800000;right:159px;">1561</div>
<div style="position:absolute;left:635.5px;top:317.7px;width:5.4px;height:5.4px;border-radius:50%;background:#006400"></div>
<div style="position:absolute;left:642.5px;top:317.7px;width:5.4px;height:5.4px;border-radius:50%;background:#006400"></div>
<div style="position:absolute;left:649.5px;top:317.7px;width:5.4px;height:5.4px;border-radius:50%;background:#006400"></div>
<div style="position:absolute;left:656.5px;top:317.7px;width:5.4px;height:5.4px;border-radius:50%;background:#006400"></div>
<div style="position:absolute;left:663.5px;top:317.7px;width:5.4px;height:5.4px;border-radius:50%;background:#006400"></div>
<div style="position:absolute;top:330.00px;font-size:12px;line-height:15px;color:#000080;font-weight:bold;white-space:pre;transform:scaleY(0.92);transform-origin:0 11px;-webkit-text-stroke:0.3px #000080;right:728.5px;">191</div>
<div style="position:absolute;top:330.00px;font-size:12px;line-height:15px;color:#000;font-weight:bold;white-space:pre;letter-spacing:-0.495px;transform:scaleY(0.92);transform-origin:0 11px;-webkit-text-stroke:0.3px #000;left:63px;">G-SENSOR shock counter</div>
<div style="position:absolute;top:330.00px;font-size:12px;line-height:15px;color:#008080;font-weight:bold;white-space:pre;transform:scaleY(0.92);transform-origin:0 11px;-webkit-text-stroke:0.3px #008080;right:410px;">100</div>
<div style="position:absolute;top:330.00px;font-size:12px;line-height:15px;color:#008080;font-weight:bold;white-space:pre;transform:scaleY(0.92);transform-origin:0 11px;-webkit-text-stroke:0.3px #008080;right:343px;">92</div>
<div style="position:absolute;top:330.00px;font-size:12px;line-height:15px;color:#808000;font-weight:bold;white-space:pre;transform:scaleY(0.92);transform-origin:0 11px;-webkit-text-stroke:0.3px #808000;right:279px;">0</div>
<div style="position:absolute;top:330.00px;font-size:12px;line-height:15px;color:#008000;font-weight:bold;white-space:pre;letter-spacing:0.2px;word-spacing:0.7px;transform:scaleY(0.92);transform-origin:0 11px;-webkit-text-stroke:0.3px #008000;right:159px;">0</div>
<div style="position:absolute;left:635.5px;top:334.7px;width:5.4px;height:5.4px;border-radius:50%;background:#006400"></div>
<div style="position:absolute;left:642.5px;top:334.7px;width:5.4px;height:5.4px;border-radius:50%;background:#006400"></div>
<div style="position:absolute;left:649.5px;top:334.7px;width:5.4px;height:5.4px;border-radius:50%;background:#006400"></div>
<div style="position:absolute;left:656.5px;top:334.7px;width:5.4px;height:5.4px;border-radius:50%;background:#006400"></div>
<div style="position:absolute;left:663.5px;top:334.7px;width:5.4px;height:5.4px;border-radius:50%;background:#006400"></div>
<div style="position:absolute;top:347.00px;font-size:12px;line-height:15px;color:#000080;font-weight:bold;white-space:pre;transform:scaleY(0.92);transform-origin:0 11px;-webkit-text-stroke:0.3px #000080;right:728.5px;">192</div>
<div style="position:absolute;top:347.00px;font-size:12px;line-height:15px;color:#000;font-weight:bold;white-space:pre;letter-spacing:-0.124px;transform:scaleY(0.92);transform-origin:0 11px;-webkit-text-stroke:0.3px #000;left:63px;">Power Off Cycles count + Retract count</div>
<div style="position:absolute;top:347.00px;font-size:12px;line-height:15px;color:#008080;font-weight:bold;white-space:pre;transform:scaleY(0.92);transform-origin:0 11px;-webkit-text-stroke:0.3px #008080;right:410px;">98</div>
<div style="position:absolute;top:347.00px;font-size:12px;line-height:15px;color:#008080;font-weight:bold;white-space:pre;transform:scaleY(0.92);transform-origin:0 11px;-webkit-text-stroke:0.3px #008080;right:343px;">98</div>
<div style="position:absolute;top:347.00px;font-size:12px;line-height:15px;color:#808000;font-weight:bold;white-space:pre;transform:scaleY(0.92);transform-origin:0 11px;-webkit-text-stroke:0.3px #808000;right:279px;">0</div>
<div style="position:absolute;top:347.00px;font-size:12px;line-height:15px;color:#800000;font-weight:bold;white-space:pre;letter-spacing:0.2px;word-spacing:0.7px;transform:scaleY(0.92);transform-origin:0 11px;-webkit-text-stroke:0.3px #800000;right:159px;">2640</div>
<div style="position:absolute;left:635.5px;top:351.7px;width:5.4px;height:5.4px;border-radius:50%;background:#ffb52e"></div>
<div style="position:absolute;left:642.5px;top:351.7px;width:5.4px;height:5.4px;border-radius:50%;background:#ffb52e"></div>
<div style="position:absolute;left:649.5px;top:351.7px;width:5.4px;height:5.4px;border-radius:50%;background:#ffb52e"></div>
<div style="position:absolute;left:656.5px;top:351.7px;width:5.4px;height:5.4px;border-radius:50%;background:#ffb52e"></div>
<div style="position:absolute;top:364.00px;font-size:12px;line-height:15px;color:#000080;font-weight:bold;white-space:pre;transform:scaleY(0.92);transform-origin:0 11px;-webkit-text-stroke:0.3px #000080;right:728.5px;">193</div>
<div style="position:absolute;top:364.00px;font-size:12px;line-height:15px;color:#000;font-weight:bold;white-space:pre;letter-spacing:-0.105px;transform:scaleY(0.92);transform-origin:0 11px;-webkit-text-stroke:0.3px #000;left:63px;">Load/unload cycle count</div>
<div style="position:absolute;top:364.00px;font-size:12px;line-height:15px;color:#008080;font-weight:bold;white-space:pre;transform:scaleY(0.92);transform-origin:0 11px;-webkit-text-stroke:0.3px #008080;right:410px;">98</div>
<div style="position:absolute;top:364.00px;font-size:12px;line-height:15px;color:#008080;font-weight:bold;white-space:pre;transform:scaleY(0.92);transform-origin:0 11px;-webkit-text-stroke:0.3px #008080;right:343px;">98</div>
<div style="position:absolute;top:364.00px;font-size:12px;line-height:15px;color:#808000;font-weight:bold;white-space:pre;transform:scaleY(0.92);transform-origin:0 11px;-webkit-text-stroke:0.3px #808000;right:279px;">0</div>
<div style="position:absolute;top:364.00px;font-size:12px;line-height:15px;color:#800000;font-weight:bold;white-space:pre;letter-spacing:0.2px;word-spacing:0.7px;transform:scaleY(0.92);transform-origin:0 11px;-webkit-text-stroke:0.3px #800000;right:159px;">2640</div>
<div style="position:absolute;left:635.5px;top:368.7px;width:5.4px;height:5.4px;border-radius:50%;background:#ffb52e"></div>
<div style="position:absolute;left:642.5px;top:368.7px;width:5.4px;height:5.4px;border-radius:50%;background:#ffb52e"></div>
<div style="position:absolute;left:649.5px;top:368.7px;width:5.4px;height:5.4px;border-radius:50%;background:#ffb52e"></div>
<div style="position:absolute;left:656.5px;top:368.7px;width:5.4px;height:5.4px;border-radius:50%;background:#ffb52e"></div>
<div style="position:absolute;top:381.00px;font-size:12px;line-height:15px;color:#000080;font-weight:bold;white-space:pre;transform:scaleY(0.92);transform-origin:0 11px;-webkit-text-stroke:0.3px #000080;right:728.5px;">194</div>
<div style="position:absolute;top:381.00px;font-size:12px;line-height:15px;color:#0000ff;font-weight:bold;white-space:pre;letter-spacing:0.107px;transform:scaleY(0.92);transform-origin:0 11px;-webkit-text-stroke:0.3px #0000ff;left:63px;">HDA Temperature</div>
<div style="position:absolute;top:381.00px;font-size:12px;line-height:15px;color:#008080;font-weight:bold;white-space:pre;transform:scaleY(0.92);transform-origin:0 11px;-webkit-text-stroke:0.3px #008080;right:410px;">127</div>
<div style="position:absolute;top:381.00px;font-size:12px;line-height:15px;color:#008080;font-weight:bold;white-space:pre;transform:scaleY(0.92);transform-origin:0 11px;-webkit-text-stroke:0.3px #008080;right:343px;">109</div>
<div style="position:absolute;top:381.00px;font-size:12px;line-height:15px;color:#808000;font-weight:bold;white-space:pre;transform:scaleY(0.92);transform-origin:0 11px;-webkit-text-stroke:0.3px #808000;right:279px;">0</div>
<div style="position:absolute;top:381.00px;font-size:12px;line-height:15px;color:#0000ff;font-weight:bold;white-space:pre;letter-spacing:0.2px;word-spacing:0.7px;transform:scaleY(0.92);transform-origin:0 11px;-webkit-text-stroke:0.3px #0000ff;right:159px;">47°C/117°F</div>
<div style="position:absolute;left:635.5px;top:385.7px;width:5.4px;height:5.4px;border-radius:50%;background:#ffb52e"></div>
<div style="position:absolute;left:642.5px;top:385.7px;width:5.4px;height:5.4px;border-radius:50%;background:#ffb52e"></div>
<div style="position:absolute;left:649.5px;top:385.7px;width:5.4px;height:5.4px;border-radius:50%;background:#ffb52e"></div>
<div style="position:absolute;left:656.5px;top:385.7px;width:5.4px;height:5.4px;border-radius:50%;background:#ffb52e"></div>
<div style="position:absolute;top:398.00px;font-size:12px;line-height:15px;color:#000080;font-weight:bold;white-space:pre;transform:scaleY(0.92);transform-origin:0 11px;-webkit-text-stroke:0.3px #000080;right:728.5px;">194</div>
<div style="position:absolute;top:398.00px;font-size:12px;line-height:15px;color:#0000ff;font-weight:bold;white-space:pre;letter-spacing:0.156px;transform:scaleY(0.92);transform-origin:0 11px;-webkit-text-stroke:0.3px #0000ff;left:63px;">Minimum temperature</div>
<div style="position:absolute;top:398.00px;font-size:12px;line-height:15px;color:#008080;font-weight:bold;white-space:pre;transform:scaleY(0.92);transform-origin:0 11px;-webkit-text-stroke:0.3px #008080;right:410px;">90</div>
<div style="position:absolute;top:398.00px;font-size:12px;line-height:15px;color:#008080;font-weight:bold;white-space:pre;transform:scaleY(0.92);transform-origin:0 11px;-webkit-text-stroke:0.3px #008080;right:343px;">109</div>
<div style="position:absolute;top:398.00px;font-size:12px;line-height:15px;color:#808000;font-weight:bold;white-space:pre;transform:scaleY(0.92);transform-origin:0 11px;-webkit-text-stroke:0.3px #808000;right:279px;">0</div>
<div style="position:absolute;top:398.00px;font-size:12px;line-height:15px;color:#0000ff;font-weight:bold;white-space:pre;letter-spacing:0.2px;word-spacing:0.7px;transform:scaleY(0.92);transform-origin:0 11px;-webkit-text-stroke:0.3px #0000ff;right:159px;">22°C/71°F</div>
<div style="position:absolute;left:635px;top:405px;width:5px;height:1.4px;background:#006400"></div>
<div style="position:absolute;top:415.00px;font-size:12px;line-height:15px;color:#000080;font-weight:bold;white-space:pre;transform:scaleY(0.92);transform-origin:0 11px;-webkit-text-stroke:0.3px #000080;right:728.5px;">194</div>
<div style="position:absolute;top:415.00px;font-size:12px;line-height:15px;color:#0000ff;font-weight:bold;white-space:pre;letter-spacing:0.250px;transform:scaleY(0.92);transform-origin:0 11px;-webkit-text-stroke:0.3px #0000ff;left:63px;">Maximum temperature</div>
<div style="position:absolute;top:415.00px;font-size:12px;line-height:15px;color:#008080;font-weight:bold;white-space:pre;transform:scaleY(0.92);transform-origin:0 11px;-webkit-text-stroke:0.3px #008080;right:410px;">90</div>
<div style="position:absolute;top:415.00px;font-size:12px;line-height:15px;color:#008080;font-weight:bold;white-space:pre;transform:scaleY(0.92);transform-origin:0 11px;-webkit-text-stroke:0.3px #008080;right:343px;">109</div>
<div style="position:absolute;top:415.00px;font-size:12px;line-height:15px;color:#808000;font-weight:bold;white-space:pre;transform:scaleY(0.92);transform-origin:0 11px;-webkit-text-stroke:0.3px #808000;right:279px;">0</div>
<div style="position:absolute;top:415.00px;font-size:12px;line-height:15px;color:#0000ff;font-weight:bold;white-space:pre;letter-spacing:0.2px;word-spacing:0.7px;transform:scaleY(0.92);transform-origin:0 11px;-webkit-text-stroke:0.3px #0000ff;right:159px;">56°C/132°F</div>
<div style="position:absolute;left:635px;top:422px;width:5px;height:1.4px;background:#006400"></div>
<div style="position:absolute;top:432.00px;font-size:12px;line-height:15px;color:#000080;font-weight:bold;white-space:pre;transform:scaleY(0.92);transform-origin:0 11px;-webkit-text-stroke:0.3px #000080;right:728.5px;">196</div>
<div style="position:absolute;top:432.00px;font-size:12px;line-height:15px;color:#800080;font-weight:bold;white-space:pre;letter-spacing:0.032px;transform:scaleY(0.92);transform-origin:0 11px;-webkit-text-stroke:0.3px #800080;left:63px;">Reallocated event count</div>
<div style="position:absolute;top:432.00px;font-size:12px;line-height:15px;color:#008080;font-weight:bold;white-space:pre;transform:scaleY(0.92);transform-origin:0 11px;-webkit-text-stroke:0.3px #008080;right:410px;">100</div>
<div style="position:absolute;top:432.00px;font-size:12px;line-height:15px;color:#008080;font-weight:bold;white-space:pre;transform:scaleY(0.92);transform-origin:0 11px;-webkit-text-stroke:0.3px #008080;right:343px;">100</div>
<div style="position:absolute;top:432.00px;font-size:12px;line-height:15px;color:#808000;font-weight:bold;white-space:pre;transform:scaleY(0.92);transform-origin:0 11px;-webkit-text-stroke:0.3px #808000;right:279px;">0</div>
<div style="position:absolute;top:432.00px;font-size:12px;line-height:15px;color:#ff0000;font-weight:bold;white-space:pre;letter-spacing:0.2px;word-spacing:0.7px;transform:scaleY(0.92);transform-origin:0 11px;-webkit-text-stroke:0.3px #ff0000;right:159px;">159</div>
<div style="position:absolute;left:635.5px;top:436.7px;width:5.4px;height:5.4px;border-radius:50%;background:#006400"></div>
<div style="position:absolute;left:642.5px;top:436.7px;width:5.4px;height:5.4px;border-radius:50%;background:#006400"></div>
<div style="position:absolute;left:649.5px;top:436.7px;width:5.4px;height:5.4px;border-radius:50%;background:#006400"></div>
<div style="position:absolute;left:656.5px;top:436.7px;width:5.4px;height:5.4px;border-radius:50%;background:#006400"></div>
<div style="position:absolute;left:663.5px;top:436.7px;width:5.4px;height:5.4px;border-radius:50%;background:#006400"></div>
<div style="position:absolute;top:449.00px;font-size:12px;line-height:15px;color:#000080;font-weight:bold;white-space:pre;transform:scaleY(0.92);transform-origin:0 11px;-webkit-text-stroke:0.3px #000080;right:728.5px;">197</div>
<div style="position:absolute;top:449.00px;font-size:12px;line-height:15px;color:#800080;font-weight:bold;white-space:pre;letter-spacing:-0.114px;transform:scaleY(0.92);transform-origin:0 11px;-webkit-text-stroke:0.3px #800080;left:63px;">Current pending sectors</div>
<div style="position:absolute;top:449.00px;font-size:12px;line-height:15px;color:#008080;font-weight:bold;white-space:pre;transform:scaleY(0.92);transform-origin:0 11px;-webkit-text-stroke:0.3px #008080;right:410px;">100</div>
<div style="position:absolute;top:449.00px;font-size:12px;line-height:15px;color:#008080;font-weight:bold;white-space:pre;transform:scaleY(0.92);transform-origin:0 11px;-webkit-text-stroke:0.3px #008080;right:343px;">100</div>
<div style="position:absolute;top:449.00px;font-size:12px;line-height:15px;color:#808000;font-weight:bold;white-space:pre;transform:scaleY(0.92);transform-origin:0 11px;-webkit-text-stroke:0.3px #808000;right:279px;">0</div>
<div style="position:absolute;top:449.00px;font-size:12px;line-height:15px;color:#ff0000;font-weight:bold;white-space:pre;letter-spacing:0.2px;word-spacing:0.7px;transform:scaleY(0.92);transform-origin:0 11px;-webkit-text-stroke:0.3px #ff0000;right:159px;">8</div>
<div style="position:absolute;left:635.5px;top:453.7px;width:5.4px;height:5.4px;border-radius:50%;background:#006400"></div>
<div style="position:absolute;left:642.5px;top:453.7px;width:5.4px;height:5.4px;border-radius:50%;background:#006400"></div>
<div style="position:absolute;left:649.5px;top:453.7px;width:5.4px;height:5.4px;border-radius:50%;background:#006400"></div>
<div style="position:absolute;left:656.5px;top:453.7px;width:5.4px;height:5.4px;border-radius:50%;background:#006400"></div>
<div style="position:absolute;left:663.5px;top:453.7px;width:5.4px;height:5.4px;border-radius:50%;background:#006400"></div>
<div style="position:absolute;top:466.00px;font-size:12px;line-height:15px;color:#000080;font-weight:bold;white-space:pre;transform:scaleY(0.92);transform-origin:0 11px;-webkit-text-stroke:0.3px #000080;right:728.5px;">198</div>
<div style="position:absolute;top:466.00px;font-size:12px;line-height:15px;color:#800080;font-weight:bold;white-space:pre;letter-spacing:-0.121px;transform:scaleY(0.92);transform-origin:0 11px;-webkit-text-stroke:0.3px #800080;left:63px;">Offline uncorrectable sectors count</div>
<div style="position:absolute;top:466.00px;font-size:12px;line-height:15px;color:#008080;font-weight:bold;white-space:pre;transform:scaleY(0.92);transform-origin:0 11px;-webkit-text-stroke:0.3px #008080;right:410px;">100</div>
<div style="position:absolute;top:466.00px;font-size:12px;line-height:15px;color:#008080;font-weight:bold;white-space:pre;transform:scaleY(0.92);transform-origin:0 11px;-webkit-text-stroke:0.3px #008080;right:343px;">100</div>
<div style="position:absolute;top:466.00px;font-size:12px;line-height:15px;color:#808000;font-weight:bold;white-space:pre;transform:scaleY(0.92);transform-origin:0 11px;-webkit-text-stroke:0.3px #808000;right:279px;">0</div>
<div style="position:absolute;top:466.00px;font-size:12px;line-height:15px;color:#008000;font-weight:bold;white-space:pre;letter-spacing:0.2px;word-spacing:0.7px;transform:scaleY(0.92);transform-origin:0 11px;-webkit-text-stroke:0.3px #008000;right:159px;">0</div>
<div style="position:absolute;left:635.5px;top:470.7px;width:5.4px;height:5.4px;border-radius:50%;background:#006400"></div>
<div style="position:absolute;left:642.5px;top:470.7px;width:5.4px;height:5.4px;border-radius:50%;background:#006400"></div>
<div style="position:absolute;left:649.5px;top:470.7px;width:5.4px;height:5.4px;border-radius:50%;background:#006400"></div>
<div style="position:absolute;left:656.5px;top:470.7px;width:5.4px;height:5.4px;border-radius:50%;background:#006400"></div>
<div style="position:absolute;left:663.5px;top:470.7px;width:5.4px;height:5.4px;border-radius:50%;background:#006400"></div>
<div style="position:absolute;top:483.00px;font-size:12px;line-height:15px;color:#000080;font-weight:bold;white-space:pre;transform:scaleY(0.92);transform-origin:0 11px;-webkit-text-stroke:0.3px #000080;right:728.5px;">199</div>
<div style="position:absolute;top:483.00px;font-size:12px;line-height:15px;color:#000;font-weight:bold;white-space:pre;letter-spacing:-0.237px;transform:scaleY(0.92);transform-origin:0 11px;-webkit-text-stroke:0.3px #000;left:63px;">Ultra DMA CRC errors</div>
<div style="position:absolute;top:483.00px;font-size:12px;line-height:15px;color:#008080;font-weight:bold;white-space:pre;transform:scaleY(0.92);transform-origin:0 11px;-webkit-text-stroke:0.3px #008080;right:410px;">200</div>
<div style="position:absolute;top:483.00px;font-size:12px;line-height:15px;color:#008080;font-weight:bold;white-space:pre;transform:scaleY(0.92);transform-origin:0 11px;-webkit-text-stroke:0.3px #008080;right:343px;">178</div>
<div style="position:absolute;top:483.00px;font-size:12px;line-height:15px;color:#808000;font-weight:bold;white-space:pre;transform:scaleY(0.92);transform-origin:0 11px;-webkit-text-stroke:0.3px #808000;right:279px;">0</div>
<div style="position:absolute;top:483.00px;font-size:12px;line-height:15px;color:#ff0000;font-weight:bold;white-space:pre;letter-spacing:0.2px;word-spacing:0.7px;transform:scaleY(0.92);transform-origin:0 11px;-webkit-text-stroke:0.3px #ff0000;right:159px;">65</div>
<div style="position:absolute;left:635.5px;top:487.7px;width:5.4px;height:5.4px;border-radius:50%;background:#006400"></div>
<div style="position:absolute;left:642.5px;top:487.7px;width:5.4px;height:5.4px;border-radius:50%;background:#006400"></div>
<div style="position:absolute;left:649.5px;top:487.7px;width:5.4px;height:5.4px;border-radius:50%;background:#006400"></div>
<div style="position:absolute;left:656.5px;top:487.7px;width:5.4px;height:5.4px;border-radius:50%;background:#006400"></div>
<div style="position:absolute;left:663.5px;top:487.7px;width:5.4px;height:5.4px;border-radius:50%;background:#006400"></div>
<div style="position:absolute;top:500.00px;font-size:12px;line-height:15px;color:#000080;font-weight:bold;white-space:pre;transform:scaleY(0.92);transform-origin:0 11px;-webkit-text-stroke:0.3px #000080;right:728.5px;">211</div>
<div style="position:absolute;top:500.00px;font-size:12px;line-height:15px;color:#000;font-weight:bold;white-space:pre;letter-spacing:-0.196px;transform:scaleY(0.92);transform-origin:0 11px;-webkit-text-stroke:0.3px #000;left:63px;">Spin running current, mA</div>
<div style="position:absolute;top:500.00px;font-size:12px;line-height:15px;color:#008080;font-weight:bold;white-space:pre;transform:scaleY(0.92);transform-origin:0 11px;-webkit-text-stroke:0.3px #008080;right:410px;">100</div>
<div style="position:absolute;top:500.00px;font-size:12px;line-height:15px;color:#008080;font-weight:bold;white-space:pre;transform:scaleY(0.92);transform-origin:0 11px;-webkit-text-stroke:0.3px #008080;right:343px;">100</div>
<div style="position:absolute;top:500.00px;font-size:12px;line-height:15px;color:#808000;font-weight:bold;white-space:pre;transform:scaleY(0.92);transform-origin:0 11px;-webkit-text-stroke:0.3px #808000;right:279px;">0</div>
<div style="position:absolute;top:500.00px;font-size:12px;line-height:15px;color:#800000;font-weight:bold;white-space:pre;letter-spacing:0.2px;word-spacing:0.7px;transform:scaleY(0.92);transform-origin:0 11px;-webkit-text-stroke:0.3px #800000;right:159px;">123 / 47 / 488</div>
<div style="position:absolute;left:635.5px;top:504.7px;width:5.4px;height:5.4px;border-radius:50%;background:#006400"></div>
<div style="position:absolute;left:642.5px;top:504.7px;width:5.4px;height:5.4px;border-radius:50%;background:#006400"></div>
<div style="position:absolute;left:649.5px;top:504.7px;width:5.4px;height:5.4px;border-radius:50%;background:#006400"></div>
<div style="position:absolute;left:656.5px;top:504.7px;width:5.4px;height:5.4px;border-radius:50%;background:#006400"></div>
<div style="position:absolute;left:663.5px;top:504.7px;width:5.4px;height:5.4px;border-radius:50%;background:#006400"></div>
<div style="position:absolute;top:517.00px;font-size:12px;line-height:15px;color:#000080;font-weight:bold;white-space:pre;transform:scaleY(0.92);transform-origin:0 11px;-webkit-text-stroke:0.3px #000080;right:728.5px;">213</div>
<div style="position:absolute;top:517.00px;font-size:12px;line-height:15px;color:#000;font-weight:bold;white-space:pre;letter-spacing:-0.233px;transform:scaleY(0.92);transform-origin:0 11px;-webkit-text-stroke:0.3px #000;left:63px;">Gr seek err/RRO-C ERP cnt</div>
<div style="position:absolute;top:517.00px;font-size:12px;line-height:15px;color:#008080;font-weight:bold;white-space:pre;transform:scaleY(0.92);transform-origin:0 11px;-webkit-text-stroke:0.3px #008080;right:410px;">0</div>
<div style="position:absolute;top:517.00px;font-size:12px;line-height:15px;color:#008080;font-weight:bold;white-space:pre;transform:scaleY(0.92);transform-origin:0 11px;-webkit-text-stroke:0.3px #008080;right:343px;">0</div>
<div style="position:absolute;top:517.00px;font-size:12px;line-height:15px;color:#808000;font-weight:bold;white-space:pre;transform:scaleY(0.92);transform-origin:0 11px;-webkit-text-stroke:0.3px #808000;right:279px;">0</div>
<div style="position:absolute;top:517.00px;font-size:12px;line-height:15px;color:#800000;font-weight:bold;white-space:pre;letter-spacing:0.2px;word-spacing:0.7px;transform:scaleY(0.92);transform-origin:0 11px;-webkit-text-stroke:0.3px #800000;right:159px;">22907 / 42188 / ...</div>
<div style="position:absolute;top:517.00px;font-size:12px;line-height:15px;color:#8a00ff;font-weight:bold;white-space:pre;letter-spacing:-0.1px;transform:scaleY(0.92);transform-origin:0 11px;-webkit-text-stroke:0.3px #8a00ff;left:632px;">special</div>
<div style="position:absolute;top:534.00px;font-size:12px;line-height:15px;color:#000080;font-weight:bold;white-space:pre;transform:scaleY(0.92);transform-origin:0 11px;-webkit-text-stroke:0.3px #000080;right:728.5px;">214</div>
<div style="position:absolute;top:534.00px;font-size:12px;line-height:15px;color:#000;font-weight:bold;white-space:pre;letter-spacing:-0.187px;transform:scaleY(0.92);transform-origin:0 11px;-webkit-text-stroke:0.3px #000;left:63px;">Ground load errors count</div>
<div style="position:absolute;top:534.00px;font-size:12px;line-height:15px;color:#008080;font-weight:bold;white-space:pre;transform:scaleY(0.92);transform-origin:0 11px;-webkit-text-stroke:0.3px #008080;right:410px;">0</div>
<div style="position:absolute;top:534.00px;font-size:12px;line-height:15px;color:#008080;font-weight:bold;white-space:pre;transform:scaleY(0.92);transform-origin:0 11px;-webkit-text-stroke:0.3px #008080;right:343px;">0</div>
<div style="position:absolute;top:534.00px;font-size:12px;line-height:15px;color:#808000;font-weight:bold;white-space:pre;transform:scaleY(0.92);transform-origin:0 11px;-webkit-text-stroke:0.3px #808000;right:279px;">0</div>
<div style="position:absolute;top:534.00px;font-size:12px;line-height:15px;color:#800000;font-weight:bold;white-space:pre;letter-spacing:0.2px;word-spacing:0.7px;transform:scaleY(0.92);transform-origin:0 11px;-webkit-text-stroke:0.3px #800000;right:159px;">1079 / 0</div>
<div style="position:absolute;top:534.00px;font-size:12px;line-height:15px;color:#8a00ff;font-weight:bold;white-space:pre;letter-spacing:-0.1px;transform:scaleY(0.92);transform-origin:0 11px;-webkit-text-stroke:0.3px #8a00ff;left:632px;">special</div>
<div style="position:absolute;top:551.00px;font-size:12px;line-height:15px;color:#000080;font-weight:bold;white-space:pre;transform:scaleY(0.92);transform-origin:0 11px;-webkit-text-stroke:0.3px #000080;right:728.5px;">215</div>
<div style="position:absolute;top:551.00px;font-size:12px;line-height:15px;color:#000;font-weight:bold;white-space:pre;letter-spacing:-0.279px;transform:scaleY(0.92);transform-origin:0 11px;-webkit-text-stroke:0.3px #000;left:63px;">Ground SpinUp errors</div>
<div style="position:absolute;top:551.00px;font-size:12px;line-height:15px;color:#008080;font-weight:bold;white-space:pre;transform:scaleY(0.92);transform-origin:0 11px;-webkit-text-stroke:0.3px #008080;right:410px;">0</div>
<div style="position:absolute;top:551.00px;font-size:12px;line-height:15px;color:#008080;font-weight:bold;white-space:pre;transform:scaleY(0.92);transform-origin:0 11px;-webkit-text-stroke:0.3px #008080;right:343px;">0</div>
<div style="position:absolute;top:551.00px;font-size:12px;line-height:15px;color:#808000;font-weight:bold;white-space:pre;transform:scaleY(0.92);transform-origin:0 11px;-webkit-text-stroke:0.3px #808000;right:279px;">0</div>
<div style="position:absolute;top:551.00px;font-size:12px;line-height:15px;color:#800000;font-weight:bold;white-space:pre;letter-spacing:0.2px;word-spacing:0.7px;transform:scaleY(0.92);transform-origin:0 11px;-webkit-text-stroke:0.3px #800000;right:159px;">926 / 0</div>
<div style="position:absolute;top:551.00px;font-size:12px;line-height:15px;color:#8a00ff;font-weight:bold;white-space:pre;letter-spacing:-0.1px;transform:scaleY(0.92);transform-origin:0 11px;-webkit-text-stroke:0.3px #8a00ff;left:632px;">special</div>
<div style="position:absolute;top:568.00px;font-size:12px;line-height:15px;color:#000080;font-weight:bold;white-space:pre;transform:scaleY(0.92);transform-origin:0 11px;-webkit-text-stroke:0.3px #000080;right:728.5px;">216</div>
<div style="position:absolute;top:568.00px;font-size:12px;line-height:15px;color:#000;font-weight:bold;white-space:pre;letter-spacing:0.030px;transform:scaleY(0.92);transform-origin:0 11px;-webkit-text-stroke:0.3px #000;left:63px;">Unexpectant errors count</div>
<div style="position:absolute;top:568.00px;font-size:12px;line-height:15px;color:#008080;font-weight:bold;white-space:pre;transform:scaleY(0.92);transform-origin:0 11px;-webkit-text-stroke:0.3px #008080;right:410px;">0</div>
<div style="position:absolute;top:568.00px;font-size:12px;line-height:15px;color:#008080;font-weight:bold;white-space:pre;transform:scaleY(0.92);transform-origin:0 11px;-webkit-text-stroke:0.3px #008080;right:343px;">0</div>
<div style="position:absolute;top:568.00px;font-size:12px;line-height:15px;color:#808000;font-weight:bold;white-space:pre;transform:scaleY(0.92);transform-origin:0 11px;-webkit-text-stroke:0.3px #808000;right:279px;">0</div>
<div style="position:absolute;top:568.00px;font-size:12px;line-height:15px;color:#800000;font-weight:bold;white-space:pre;letter-spacing:0.2px;word-spacing:0.7px;transform:scaleY(0.92);transform-origin:0 11px;-webkit-text-stroke:0.3px #800000;right:159px;">10 / 57 / 58</div>
<div style="position:absolute;top:568.00px;font-size:12px;line-height:15px;color:#8a00ff;font-weight:bold;white-space:pre;letter-spacing:-0.1px;transform:scaleY(0.92);transform-origin:0 11px;-webkit-text-stroke:0.3px #8a00ff;left:632px;">special</div>
<div style="position:absolute;top:585.00px;font-size:12px;line-height:15px;color:#000080;font-weight:bold;white-space:pre;transform:scaleY(0.92);transform-origin:0 11px;-webkit-text-stroke:0.3px #000080;right:728.5px;">217</div>
<div style="position:absolute;top:585.00px;font-size:12px;line-height:15px;color:#000;font-weight:bold;white-space:pre;letter-spacing:-0.040px;transform:scaleY(0.92);transform-origin:0 11px;-webkit-text-stroke:0.3px #000;left:63px;">Unlock/Mis read count</div>
<div style="position:absolute;top:585.00px;font-size:12px;line-height:15px;color:#008080;font-weight:bold;white-space:pre;transform:scaleY(0.92);transform-origin:0 11px;-webkit-text-stroke:0.3px #008080;right:410px;">0</div>
<div style="position:absolute;top:585.00px;font-size:12px;line-height:15px;color:#008080;font-weight:bold;white-space:pre;transform:scaleY(0.92);transform-origin:0 11px;-webkit-text-stroke:0.3px #008080;right:343px;">0</div>
<div style="position:absolute;top:585.00px;font-size:12px;line-height:15px;color:#808000;font-weight:bold;white-space:pre;transform:scaleY(0.92);transform-origin:0 11px;-webkit-text-stroke:0.3px #808000;right:279px;">0</div>
<div style="position:absolute;top:585.00px;font-size:12px;line-height:15px;color:#800000;font-weight:bold;white-space:pre;letter-spacing:0.2px;word-spacing:0.7px;transform:scaleY(0.92);transform-origin:0 11px;-webkit-text-stroke:0.3px #800000;right:159px;">37676 / 0 / 0</div>
<div style="position:absolute;top:585.00px;font-size:12px;line-height:15px;color:#8a00ff;font-weight:bold;white-space:pre;letter-spacing:-0.1px;transform:scaleY(0.92);transform-origin:0 11px;-webkit-text-stroke:0.3px #8a00ff;left:632px;">special</div>
<div style="position:absolute;top:602.00px;font-size:12px;line-height:15px;color:#000080;font-weight:bold;white-space:pre;transform:scaleY(0.92);transform-origin:0 11px;-webkit-text-stroke:0.3px #000080;right:728.5px;">218</div>
<div style="position:absolute;top:602.00px;font-size:12px;line-height:15px;color:#000;font-weight:bold;white-space:pre;letter-spacing:-0.517px;transform:scaleY(0.92);transform-origin:0 11px;-webkit-text-stroke:0.3px #000;left:63px;">FlashROM ECC corr. count</div>
<div style="position:absolute;top:602.00px;font-size:12px;line-height:15px;color:#008080;font-weight:bold;white-space:pre;transform:scaleY(0.92);transform-origin:0 11px;-webkit-text-stroke:0.3px #008080;right:410px;">100</div>
<div style="position:absolute;top:602.00px;font-size:12px;line-height:15px;color:#008080;font-weight:bold;white-space:pre;transform:scaleY(0.92);transform-origin:0 11px;-webkit-text-stroke:0.3px #008080;right:343px;">100</div>
<div style="position:absolute;top:602.00px;font-size:12px;line-height:15px;color:#808000;font-weight:bold;white-space:pre;transform:scaleY(0.92);transform-origin:0 11px;-webkit-text-stroke:0.3px #808000;right:279px;">0</div>
<div style="position:absolute;top:602.00px;font-size:12px;line-height:15px;color:#800000;font-weight:bold;white-space:pre;letter-spacing:0.2px;word-spacing:0.7px;transform:scaleY(0.92);transform-origin:0 11px;-webkit-text-stroke:0.3px #800000;right:159px;">0</div>
<div style="position:absolute;left:635.5px;top:606.7px;width:5.4px;height:5.4px;border-radius:50%;background:#006400"></div>
<div style="position:absolute;left:642.5px;top:606.7px;width:5.4px;height:5.4px;border-radius:50%;background:#006400"></div>
<div style="position:absolute;left:649.5px;top:606.7px;width:5.4px;height:5.4px;border-radius:50%;background:#006400"></div>
<div style="position:absolute;left:656.5px;top:606.7px;width:5.4px;height:5.4px;border-radius:50%;background:#006400"></div>
<div style="position:absolute;left:663.5px;top:606.7px;width:5.4px;height:5.4px;border-radius:50%;background:#006400"></div>
<div style="position:absolute;top:619.00px;font-size:12px;line-height:15px;color:#000080;font-weight:bold;white-space:pre;transform:scaleY(0.92);transform-origin:0 11px;-webkit-text-stroke:0.3px #000080;right:728.5px;">222</div>
<div style="position:absolute;top:619.00px;font-size:12px;line-height:15px;color:#000;font-weight:bold;white-space:pre;letter-spacing:-0.245px;transform:scaleY(0.92);transform-origin:0 11px;-webkit-text-stroke:0.3px #000;left:63px;">Loaded hours</div>
<div style="position:absolute;top:619.00px;font-size:12px;line-height:15px;color:#008080;font-weight:bold;white-space:pre;transform:scaleY(0.92);transform-origin:0 11px;-webkit-text-stroke:0.3px #008080;right:410px;">99</div>
<div style="position:absolute;top:619.00px;font-size:12px;line-height:15px;color:#008080;font-weight:bold;white-space:pre;transform:scaleY(0.92);transform-origin:0 11px;-webkit-text-stroke:0.3px #008080;right:343px;">99</div>
<div style="position:absolute;top:619.00px;font-size:12px;line-height:15px;color:#808000;font-weight:bold;white-space:pre;transform:scaleY(0.92);transform-origin:0 11px;-webkit-text-stroke:0.3px #808000;right:279px;">0</div>
<div style="position:absolute;top:619.00px;font-size:12px;line-height:15px;color:#800000;font-weight:bold;white-space:pre;letter-spacing:0.2px;word-spacing:0.7px;transform:scaleY(0.92);transform-origin:0 11px;-webkit-text-stroke:0.3px #800000;right:159px;">13218</div>
<div style="position:absolute;left:635.5px;top:623.7px;width:5.4px;height:5.4px;border-radius:50%;background:#ffb52e"></div>
<div style="position:absolute;left:642.5px;top:623.7px;width:5.4px;height:5.4px;border-radius:50%;background:#ffb52e"></div>
<div style="position:absolute;left:649.5px;top:623.7px;width:5.4px;height:5.4px;border-radius:50%;background:#ffb52e"></div>
<div style="position:absolute;left:656.5px;top:623.7px;width:5.4px;height:5.4px;border-radius:50%;background:#ffb52e"></div>
<div style="position:absolute;top:636.00px;font-size:12px;line-height:15px;color:#000080;font-weight:bold;white-space:pre;transform:scaleY(0.92);transform-origin:0 11px;-webkit-text-stroke:0.3px #000080;right:728.5px;">223</div>
<div style="position:absolute;top:636.00px;font-size:12px;line-height:15px;color:#008000;font-weight:bold;white-space:pre;letter-spacing:-0.053px;transform:scaleY(0.92);transform-origin:0 11px;-webkit-text-stroke:0.3px #008000;left:63px;">Load retry count</div>
<div style="position:absolute;top:636.00px;font-size:12px;line-height:15px;color:#008080;font-weight:bold;white-space:pre;transform:scaleY(0.92);transform-origin:0 11px;-webkit-text-stroke:0.3px #008080;right:410px;">100</div>
<div style="position:absolute;top:636.00px;font-size:12px;line-height:15px;color:#008080;font-weight:bold;white-space:pre;transform:scaleY(0.92);transform-origin:0 11px;-webkit-text-stroke:0.3px #008080;right:343px;">100</div>
<div style="position:absolute;top:636.00px;font-size:12px;line-height:15px;color:#808000;font-weight:bold;white-space:pre;transform:scaleY(0.92);transform-origin:0 11px;-webkit-text-stroke:0.3px #808000;right:279px;">50</div>
<div style="position:absolute;top:636.00px;font-size:12px;line-height:15px;color:#008000;font-weight:bold;white-space:pre;letter-spacing:0.2px;word-spacing:0.7px;transform:scaleY(0.92);transform-origin:0 11px;-webkit-text-stroke:0.3px #008000;right:159px;">0</div>
<div style="position:absolute;left:635.5px;top:640.7px;width:5.4px;height:5.4px;border-radius:50%;background:#006400"></div>
<div style="position:absolute;left:642.5px;top:640.7px;width:5.4px;height:5.4px;border-radius:50%;background:#006400"></div>
<div style="position:absolute;left:649.5px;top:640.7px;width:5.4px;height:5.4px;border-radius:50%;background:#006400"></div>
<div style="position:absolute;left:656.5px;top:640.7px;width:5.4px;height:5.4px;border-radius:50%;background:#006400"></div>
<div style="position:absolute;left:663.5px;top:640.7px;width:5.4px;height:5.4px;border-radius:50%;background:#006400"></div>
<div style="position:absolute;top:653.00px;font-size:12px;line-height:15px;color:#000080;font-weight:bold;white-space:pre;transform:scaleY(0.92);transform-origin:0 11px;-webkit-text-stroke:0.3px #000080;right:728.5px;">226</div>
<div style="position:absolute;top:653.00px;font-size:12px;line-height:15px;color:#008000;font-weight:bold;white-space:pre;letter-spacing:-0.036px;transform:scaleY(0.92);transform-origin:0 11px;-webkit-text-stroke:0.3px #008000;left:63px;">Load-in time</div>
<div style="position:absolute;top:653.00px;font-size:12px;line-height:15px;color:#008080;font-weight:bold;white-space:pre;transform:scaleY(0.92);transform-origin:0 11px;-webkit-text-stroke:0.3px #008080;right:410px;">167</div>
<div style="position:absolute;top:653.00px;font-size:12px;line-height:15px;color:#008080;font-weight:bold;white-space:pre;transform:scaleY(0.92);transform-origin:0 11px;-webkit-text-stroke:0.3px #008080;right:343px;">100</div>
<div style="position:absolute;top:653.00px;font-size:12px;line-height:15px;color:#808000;font-weight:bold;white-space:pre;transform:scaleY(0.92);transform-origin:0 11px;-webkit-text-stroke:0.3px #808000;right:279px;">40</div>
<div style="position:absolute;top:653.00px;font-size:12px;line-height:15px;color:#800000;font-weight:bold;white-space:pre;letter-spacing:0.2px;word-spacing:0.7px;transform:scaleY(0.92);transform-origin:0 11px;-webkit-text-stroke:0.3px #800000;right:159px;">50 / 50 / 1</div>
<div style="position:absolute;left:635.5px;top:657.7px;width:5.4px;height:5.4px;border-radius:50%;background:#006400"></div>
<div style="position:absolute;left:642.5px;top:657.7px;width:5.4px;height:5.4px;border-radius:50%;background:#006400"></div>
<div style="position:absolute;left:649.5px;top:657.7px;width:5.4px;height:5.4px;border-radius:50%;background:#006400"></div>
<div style="position:absolute;left:656.5px;top:657.7px;width:5.4px;height:5.4px;border-radius:50%;background:#006400"></div>
<div style="position:absolute;left:663.5px;top:657.7px;width:5.4px;height:5.4px;border-radius:50%;background:#006400"></div>
<div style="position:absolute;top:670.00px;font-size:12px;line-height:15px;color:#000080;font-weight:bold;white-space:pre;transform:scaleY(0.92);transform-origin:0 11px;-webkit-text-stroke:0.3px #000080;right:728.5px;">230</div>
<div style="position:absolute;top:670.00px;font-size:12px;line-height:15px;color:#000;font-weight:bold;white-space:pre;letter-spacing:-0.159px;transform:scaleY(0.92);transform-origin:0 11px;-webkit-text-stroke:0.3px #000;left:63px;">GMR head amplitude</div>
<div style="position:absolute;top:670.00px;font-size:12px;line-height:15px;color:#008080;font-weight:bold;white-space:pre;transform:scaleY(0.92);transform-origin:0 11px;-webkit-text-stroke:0.3px #008080;right:410px;">1</div>
<div style="position:absolute;top:670.00px;font-size:12px;line-height:15px;color:#008080;font-weight:bold;white-space:pre;transform:scaleY(0.92);transform-origin:0 11px;-webkit-text-stroke:0.3px #008080;right:343px;">1</div>
<div style="position:absolute;top:670.00px;font-size:12px;line-height:15px;color:#808000;font-weight:bold;white-space:pre;transform:scaleY(0.92);transform-origin:0 11px;-webkit-text-stroke:0.3px #808000;right:279px;">0</div>
<div style="position:absolute;top:670.00px;font-size:12px;line-height:15px;color:#800000;font-weight:bold;white-space:pre;letter-spacing:0.2px;word-spacing:0.7px;transform:scaleY(0.92);transform-origin:0 11px;-webkit-text-stroke:0.3px #800000;right:159px;">327 / 1</div>
<div style="position:absolute;left:635.5px;top:674.7px;width:5.4px;height:5.4px;border-radius:50%;background:#ffb52e"></div>
<div style="position:absolute;left:642.5px;top:674.7px;width:5.4px;height:5.4px;border-radius:50%;background:#ffb52e"></div>
<div style="position:absolute;left:649.5px;top:674.7px;width:5.4px;height:5.4px;border-radius:50%;background:#ffb52e"></div>
<div style="position:absolute;left:656.5px;top:674.7px;width:5.4px;height:5.4px;border-radius:50%;background:#ffb52e"></div>
<div style="position:absolute;left:12px;top:695px;width:681px;height:3px;background:#dcdcdc"></div>
<div style="position:absolute;left:12px;top:698px;width:681px;height:1px;background:#a8a8a8"></div>
<div style="position:absolute;left:12px;top:699px;width:681px;height:22px;background:#d9d9d9"></div>
<div style="position:absolute;left:8px;top:723px;width:687px;height:1px;background:#7f8896"></div>
<div style="position:absolute;left:693px;top:129px;width:1px;height:594px;background:#fff"></div>
<div style="position:absolute;left:694px;top:128px;width:1px;height:596px;background:#7f8896"></div>
<div style="position:absolute;left:14px;top:701px;width:170px;height:19px;border:1px solid #3c7fb1;border-radius:3px;box-sizing:border-box;background:linear-gradient(180deg,#f2f2f2 0%,#ebebeb 45%,#dddddd 50%,#cfcfcf 100%);box-shadow:inset 0 0 0 1px #48c8f5"></div>
<div style="position:absolute;top:704.00px;font-size:12px;line-height:15px;color:#000;font-weight:normal;white-space:pre;letter-spacing:0.1px;left:-101px;width:400px;text-align:center;">Get S.M.A.R.T.</div>
<div style="position:absolute;top:704.00px;font-size:12px;line-height:15px;color:#000;font-weight:normal;white-space:pre;left:204px;">Status:</div>
<div style="position:absolute;left:250px;top:702px;width:58px;height:17px;background:#ff0000;border:1px solid #000;box-sizing:border-box"></div>
<div style="position:absolute;top:704.00px;font-size:12px;line-height:15px;color:#fff;font-weight:normal;white-space:pre;left:79px;width:400px;text-align:center;">BAD!</div>
<div style="position:absolute;left:337px;top:704px;width:13px;height:13px;border:1px solid #8f8f8f;box-sizing:border-box;background:linear-gradient(135deg,#dcdcdc,#f8f8f8)"></div>
<div style="position:absolute;top:704.00px;font-size:12px;line-height:15px;color:#000;font-weight:normal;white-space:pre;letter-spacing:-0.2px;left:355px;">HEX raw values</div>
<div style="position:absolute;top:704.00px;font-size:12px;line-height:15px;color:#000;font-weight:normal;white-space:pre;left:524px;">IBM super smart:</div>
<div style="position:absolute;left:621px;top:704px;width:13px;height:13px;border:1px solid #8f8f8f;box-sizing:border-box;background:linear-gradient(135deg,#dcdcdc,#f8f8f8)"></div>
<svg style="position:absolute;left:621px;top:704px" width="13" height="13" viewBox="0 0 13 13"><path d="M3.2 6.5 L5.4 9.5 L9.8 3" stroke="#3d4fa8" stroke-width="1.6" fill="none"/></svg>
<div style="position:absolute;left:652px;top:704px;width:13px;height:14px;background:#8ac4ff;border:1px solid #000;border-radius:2px;box-sizing:border-box"></div>
<div style="position:absolute;left:695px;top:127px;width:2px;height:596px;background:#fff"></div>
<div style="position:absolute;left:697px;top:127px;width:71px;height:596px;background:#ababab;border-left:1px solid #6c6c6c;border-top:1px solid #6c6c6c;box-sizing:border-box"></div>
<div style="position:absolute;left:767px;top:127px;width:1px;height:596px;background:#f4f4f4"></div>
<div style="position:absolute;left:707px;top:137px;width:12px;height:12px;border-radius:50%;background:#f2f2f2;box-sizing:border-box;border:1px solid #9a9a9a"></div>
<div style="position:absolute;left:710px;top:140px;width:6px;height:6px;border-radius:50%;background:radial-gradient(circle at 40% 35%,#c8c8c8,#8e8e8e)"></div>
<div style="position:absolute;left:707px;top:159px;width:12px;height:12px;border-radius:50%;background:radial-gradient(circle at 50% 40%,#fafafa,#d6d6d6)"></div>
<div style="position:absolute;top:137.00px;font-size:12px;line-height:15px;color:#7c7c7c;font-weight:normal;white-space:pre;left:725px;">API</div>
<div style="position:absolute;top:158.00px;font-size:12px;line-height:15px;color:#7c7c7c;font-weight:normal;white-space:pre;left:725px;">PIO</div>
<div style="position:absolute;left:705px;top:187px;width:19px;height:10px;background:#8a8a8a;border:1px solid #000;box-sizing:border-box"></div>
<div style="position:absolute;left:704px;top:218px;width:57px;height:22px;border:1px solid #707070;border-radius:3px;box-sizing:border-box;background:linear-gradient(180deg,#f4f4f4 0%,#ececec 45%,#dedede 50%,#d2d2d2 100%);box-shadow:inset 0 0 0 1px rgba(255,255,255,0.6)"></div>
<div style="position:absolute;top:222.00px;font-size:12px;line-height:15px;color:#000;font-weight:normal;white-space:pre;left:532.5px;width:400px;text-align:center;">Sleep</div>
<div style="position:absolute;left:704px;top:280px;width:57px;height:22px;border:1px solid #707070;border-radius:3px;box-sizing:border-box;background:linear-gradient(180deg,#f4f4f4 0%,#ececec 45%,#dedede 50%,#d2d2d2 100%);box-shadow:inset 0 0 0 1px rgba(255,255,255,0.6)"></div>
<div style="position:absolute;top:284.00px;font-size:12px;line-height:15px;color:#000;font-weight:normal;white-space:pre;left:532.5px;width:400px;text-align:center;">Recall</div>
<div style="position:absolute;left:703px;top:607px;width:27px;height:13px;border:1px solid #111;border-radius:2px;box-sizing:border-box;background:#a2a2a6"></div>
<div style="position:absolute;left:735px;top:607px;width:27px;height:13px;border:1px solid #111;border-radius:2px;box-sizing:border-box;background:#a2a2a6"></div>
<div style="position:absolute;top:609.00px;font-size:10px;line-height:12px;color:#c4c4c4;font-weight:bold;white-space:pre;left:516.5px;width:400px;text-align:center;">WR</div>
<div style="position:absolute;top:609.00px;font-size:10px;line-height:12px;color:#c4c4c4;font-weight:bold;white-space:pre;left:548.5px;width:400px;text-align:center;">RD</div>
<div style="position:absolute;left:704px;top:677px;width:57px;height:22px;border:1px solid #707070;border-radius:3px;box-sizing:border-box;background:linear-gradient(180deg,#f4f4f4 0%,#ececec 45%,#dedede 50%,#d2d2d2 100%);box-shadow:inset 0 0 0 1px rgba(255,255,255,0.6)"></div>
<div style="position:absolute;top:681.00px;font-size:12px;line-height:15px;color:#000;font-weight:normal;white-space:pre;left:532.5px;width:400px;text-align:center;">Passp</div>
<div style="position:absolute;left:8px;top:723px;width:761px;height:5px;background:#f0f0f0"></div>
<div style="position:absolute;left:8px;top:723px;width:687px;height:1px;background:#fff"></div>
<div style="position:absolute;left:8px;top:728px;width:687px;height:94px;background:#f4fff4;border:1px solid #7f8896;box-sizing:border-box"></div>
<div style="position:absolute;left:9px;top:749px;width:669px;height:1px;background:#e6ebe6"></div>
<div style="position:absolute;left:9px;top:769px;width:669px;height:1px;background:#e6ebe6"></div>
<div style="position:absolute;left:9px;top:789px;width:669px;height:1px;background:#e6ebe6"></div>
<div style="position:absolute;left:9px;top:809px;width:669px;height:1px;background:#e6ebe6"></div>
<div style="position:absolute;left:80px;top:729px;width:1px;height:92px;background:#e6ebe6"></div>
<div style="position:absolute;top:733.00px;font-size:13px;line-height:16px;color:#000;font-weight:normal;white-space:pre;letter-spacing:0.05px;left:18.5px;">12:22:28</div>
<div style="position:absolute;top:733.00px;font-size:13px;line-height:16px;color:#ff0000;font-weight:normal;white-space:pre;letter-spacing:-0.07px;left:86px;">Victoria reported: SMART status = BAD!</div>
<div style="position:absolute;top:753.00px;font-size:13px;line-height:16px;color:#000;font-weight:normal;white-space:pre;letter-spacing:0.05px;left:18.5px;">13:14:41</div>
<div style="position:absolute;top:753.00px;font-size:13px;line-height:16px;color:#000;font-weight:normal;white-space:pre;letter-spacing:-0.07px;left:86px;">Get S.M.A.R.T. command... OK</div>
<div style="position:absolute;top:773.00px;font-size:13px;line-height:16px;color:#000;font-weight:normal;white-space:pre;letter-spacing:0.05px;left:18.5px;">13:14:42</div>
<div style="position:absolute;top:773.00px;font-size:13px;line-height:16px;color:#000;font-weight:normal;white-space:pre;letter-spacing:-0.07px;left:86px;">Drive reported: SMART status = GOOD</div>
<div style="position:absolute;top:793.00px;font-size:13px;line-height:16px;color:#000;font-weight:normal;white-space:pre;letter-spacing:0.05px;left:18.5px;">13:14:42</div>
<div style="position:absolute;top:793.00px;font-size:13px;line-height:16px;color:#ff0000;font-weight:normal;white-space:pre;letter-spacing:-0.07px;left:86px;">Victoria reported: SMART status = BAD!</div>
<div style="position:absolute;left:678px;top:729px;width:16px;height:92px;background:linear-gradient(90deg,#e6e6e6,#f2f2f2 40%,#f0f0f0)"></div>
<svg style="position:absolute;left:682px;top:736px" width="9" height="6" viewBox="0 0 9 6"><path d="M1 4.8 L4.5 1 L8 4.8 Z" fill="#333"/></svg>
<svg style="position:absolute;left:682px;top:809px" width="9" height="6" viewBox="0 0 9 6"><path d="M1 1 L4.5 4.8 L8 1 Z" fill="#333"/></svg>
<div style="position:absolute;left:678px;top:787px;width:15px;height:15px;border:1px solid #9a9a9a;border-radius:2px;box-sizing:border-box;background:linear-gradient(90deg,#f6f6f6,#e0e0e0 60%,#cfcfcf)"></div>
<div style="position:absolute;left:695px;top:728px;width:73px;height:94px;background:#ababab"></div>
<div style="position:absolute;left:695px;top:821px;width:74px;height:1px;background:#fff"></div>
<div style="position:absolute;left:768px;top:728px;width:1px;height:94px;background:#fff"></div>
<div style="position:absolute;left:705px;top:738px;width:13px;height:12px;border:1px solid #8f8f8f;box-sizing:border-box;background:linear-gradient(135deg,#d8dde8,#f8f8f8)"></div>
<svg style="position:absolute;left:705px;top:738px" width="13" height="12" viewBox="0 0 13 12"><path d="M3 6 L5.4 9.5 L10 1.8" stroke="#3d4fa8" stroke-width="1.7" fill="none"/></svg>
<div style="position:absolute;left:705px;top:761px;width:13px;height:12px;border:1px solid #8f8f8f;box-sizing:border-box;background:linear-gradient(135deg,#d8dde8,#f8f8f8)"></div>
<div style="position:absolute;top:738.00px;font-size:12px;line-height:15px;color:#000;font-weight:normal;white-space:pre;left:723px;">Sound</div>
<div style="position:absolute;top:760.00px;font-size:12px;line-height:15px;color:#000;font-weight:normal;white-space:pre;left:723px;">Hints</div></body></html>
